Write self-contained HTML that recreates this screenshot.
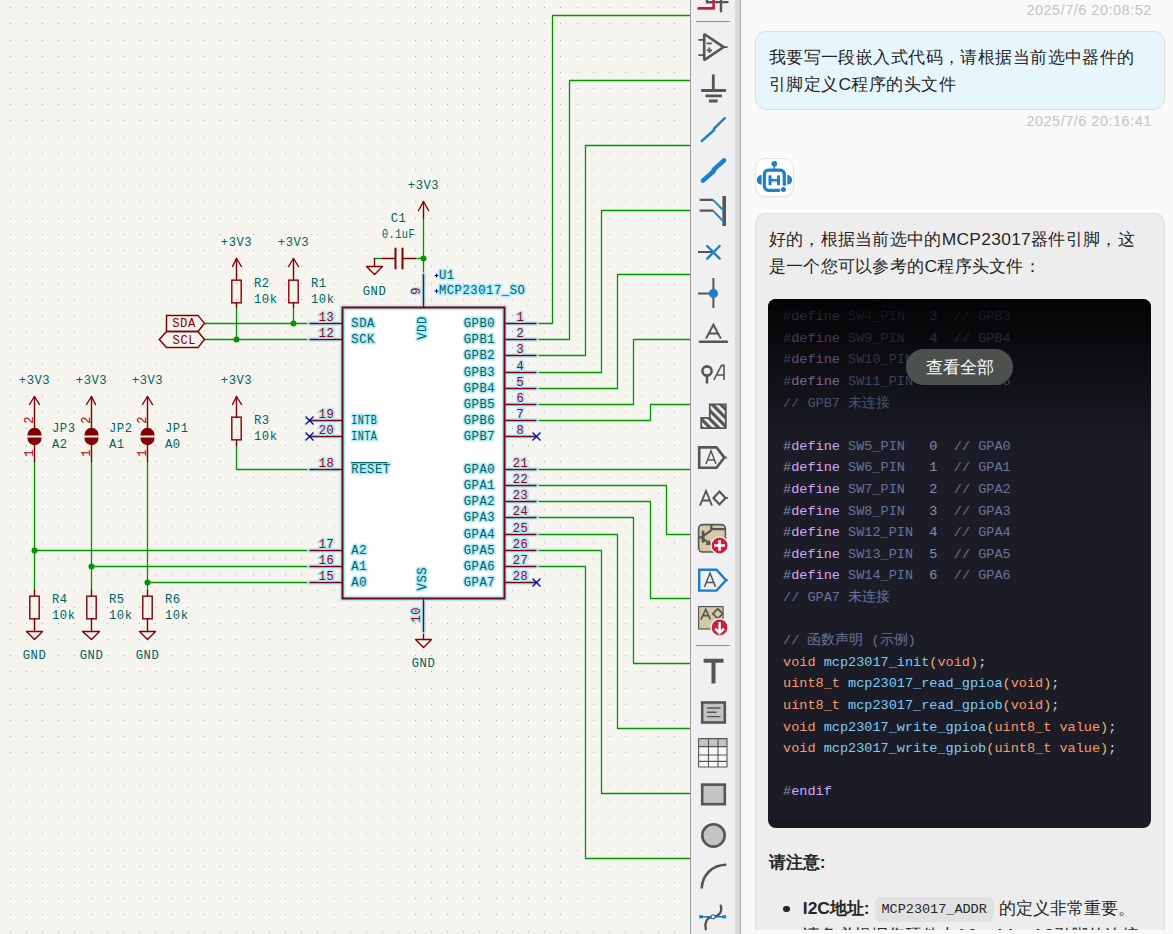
<!DOCTYPE html>
<html><head><meta charset="utf-8"><style>
html,body{margin:0;padding:0;width:1173px;height:934px;overflow:hidden;background:#f5f4ef;}
body{position:relative;font-family:"Liberation Sans",sans-serif;}
svg.sch{position:absolute;left:0;top:0;}
svg.sch text{font-family:"Liberation Mono",monospace;}
#panel{position:absolute;left:741px;top:0;width:432px;height:934px;background:#fafafa;overflow:hidden;color:#222;text-spacing-trim:space-all;}
.ts{position:absolute;right:21.2px;font-size:14.5px;letter-spacing:0.5px;color:#c4c4c4;line-height:17px;white-space:nowrap;}
.bub{position:absolute;box-sizing:border-box;}
.ub{left:14px;top:31px;width:410px;height:78.5px;background:#e7f6fd;border:1px solid #dadcdd;border-radius:11px;}
.ut{position:absolute;left:27.7px;font-size:17.4px;letter-spacing:0.43px;line-height:27px;white-space:nowrap;color:#262626;}
.av{position:absolute;left:14.4px;top:158px;width:38.5px;height:39px;box-sizing:border-box;background:#fff;border:1px solid #e4e4e4;border-radius:10px;box-shadow:0 1px 2px rgba(0,0,0,0.05);}
.ab{left:14px;top:213px;width:410px;height:717px;background:#ededed;border:1px solid #dedede;border-bottom:none;border-radius:10px 10px 0 0;overflow:hidden;}
.code{position:absolute;left:26.5px;top:299.2px;width:383.6px;height:528.9px;background:#1c1c27;border-radius:8px;overflow:hidden;}
.codein{position:absolute;left:15.5px;top:-14.5px;font-family:"Liberation Mono",monospace;font-size:13.55px;line-height:21.6px;white-space:pre;color:#6d7599;}
.cl{height:21.6px;}
.hs{color:#8a8fa3}.kw{color:#d4a8f2}.id{color:#6a7397}.nm{color:#8a90ab}.cm{color:#6a739a}
.ty{color:#f79a68}.fn{color:#7acdfb}.pa{color:#f0b36a}.pu{color:#c9cfe0}
.fade{position:absolute;left:0;top:0;width:100%;height:150px;background:linear-gradient(to bottom,rgba(0,0,0,0.88) 0%,rgba(0,0,0,0.5) 45%,rgba(0,0,0,0) 100%);}
.btn{position:absolute;left:165px;top:348.7px;width:107px;height:36px;border-radius:18px;background:#4c514e;color:#fff;font-size:17px;line-height:38.5px;text-align:center;}
.nt{position:absolute;left:27.8px;top:849px;font-size:17.4px;font-weight:bold;line-height:27px;color:#262626;white-space:nowrap;}
.li{position:absolute;left:0;top:895px;font-size:17.4px;line-height:27px;color:#262626;white-space:nowrap;}
.chip{display:inline-block;background:#e1e1e1;border-radius:6px;font-family:"Liberation Mono",monospace;font-size:13.5px;padding:0 7px;line-height:25px;vertical-align:1px;}
</style></head><body>
<svg class="sch" width="741" height="934" viewBox="0 0 741 934">
<path d="M10 7h1v1h-1zM10 23h1v1h-1zM10 40h1v1h-1zM10 56h1v1h-1zM10 72h1v1h-1zM10 88h1v1h-1zM10 104h1v1h-1zM10 120h1v1h-1zM10 137h1v1h-1zM10 153h1v1h-1zM10 169h1v1h-1zM10 185h1v1h-1zM10 201h1v1h-1zM10 218h1v1h-1zM10 234h1v1h-1zM10 250h1v1h-1zM10 266h1v1h-1zM10 283h1v1h-1zM10 299h1v1h-1zM10 315h1v1h-1zM10 331h1v1h-1zM10 347h1v1h-1zM10 364h1v1h-1zM10 380h1v1h-1zM10 396h1v1h-1zM10 412h1v1h-1zM10 428h1v1h-1zM10 445h1v1h-1zM10 461h1v1h-1zM10 477h1v1h-1zM10 493h1v1h-1zM10 509h1v1h-1zM10 526h1v1h-1zM10 542h1v1h-1zM10 558h1v1h-1zM10 574h1v1h-1zM10 590h1v1h-1zM10 607h1v1h-1zM10 623h1v1h-1zM10 639h1v1h-1zM10 655h1v1h-1zM10 671h1v1h-1zM10 688h1v1h-1zM10 704h1v1h-1zM10 720h1v1h-1zM10 736h1v1h-1zM10 752h1v1h-1zM10 769h1v1h-1zM10 785h1v1h-1zM10 801h1v1h-1zM10 817h1v1h-1zM10 833h1v1h-1zM10 850h1v1h-1zM10 866h1v1h-1zM10 882h1v1h-1zM10 898h1v1h-1zM10 914h1v1h-1zM10 931h1v1h-1zM26 7h1v1h-1zM26 23h1v1h-1zM26 40h1v1h-1zM26 56h1v1h-1zM26 72h1v1h-1zM26 88h1v1h-1zM26 104h1v1h-1zM26 120h1v1h-1zM26 137h1v1h-1zM26 153h1v1h-1zM26 169h1v1h-1zM26 185h1v1h-1zM26 201h1v1h-1zM26 218h1v1h-1zM26 234h1v1h-1zM26 250h1v1h-1zM26 266h1v1h-1zM26 283h1v1h-1zM26 299h1v1h-1zM26 315h1v1h-1zM26 331h1v1h-1zM26 347h1v1h-1zM26 364h1v1h-1zM26 380h1v1h-1zM26 396h1v1h-1zM26 412h1v1h-1zM26 428h1v1h-1zM26 445h1v1h-1zM26 461h1v1h-1zM26 477h1v1h-1zM26 493h1v1h-1zM26 509h1v1h-1zM26 526h1v1h-1zM26 542h1v1h-1zM26 558h1v1h-1zM26 574h1v1h-1zM26 590h1v1h-1zM26 607h1v1h-1zM26 623h1v1h-1zM26 639h1v1h-1zM26 655h1v1h-1zM26 671h1v1h-1zM26 688h1v1h-1zM26 704h1v1h-1zM26 720h1v1h-1zM26 736h1v1h-1zM26 752h1v1h-1zM26 769h1v1h-1zM26 785h1v1h-1zM26 801h1v1h-1zM26 817h1v1h-1zM26 833h1v1h-1zM26 850h1v1h-1zM26 866h1v1h-1zM26 882h1v1h-1zM26 898h1v1h-1zM26 914h1v1h-1zM26 931h1v1h-1zM42 7h1v1h-1zM42 23h1v1h-1zM42 40h1v1h-1zM42 56h1v1h-1zM42 72h1v1h-1zM42 88h1v1h-1zM42 104h1v1h-1zM42 120h1v1h-1zM42 137h1v1h-1zM42 153h1v1h-1zM42 169h1v1h-1zM42 185h1v1h-1zM42 201h1v1h-1zM42 218h1v1h-1zM42 234h1v1h-1zM42 250h1v1h-1zM42 266h1v1h-1zM42 283h1v1h-1zM42 299h1v1h-1zM42 315h1v1h-1zM42 331h1v1h-1zM42 347h1v1h-1zM42 364h1v1h-1zM42 380h1v1h-1zM42 396h1v1h-1zM42 412h1v1h-1zM42 428h1v1h-1zM42 445h1v1h-1zM42 461h1v1h-1zM42 477h1v1h-1zM42 493h1v1h-1zM42 509h1v1h-1zM42 526h1v1h-1zM42 542h1v1h-1zM42 558h1v1h-1zM42 574h1v1h-1zM42 590h1v1h-1zM42 607h1v1h-1zM42 623h1v1h-1zM42 639h1v1h-1zM42 655h1v1h-1zM42 671h1v1h-1zM42 688h1v1h-1zM42 704h1v1h-1zM42 720h1v1h-1zM42 736h1v1h-1zM42 752h1v1h-1zM42 769h1v1h-1zM42 785h1v1h-1zM42 801h1v1h-1zM42 817h1v1h-1zM42 833h1v1h-1zM42 850h1v1h-1zM42 866h1v1h-1zM42 882h1v1h-1zM42 898h1v1h-1zM42 914h1v1h-1zM42 931h1v1h-1zM58 7h1v1h-1zM58 23h1v1h-1zM58 40h1v1h-1zM58 56h1v1h-1zM58 72h1v1h-1zM58 88h1v1h-1zM58 104h1v1h-1zM58 120h1v1h-1zM58 137h1v1h-1zM58 153h1v1h-1zM58 169h1v1h-1zM58 185h1v1h-1zM58 201h1v1h-1zM58 218h1v1h-1zM58 234h1v1h-1zM58 250h1v1h-1zM58 266h1v1h-1zM58 283h1v1h-1zM58 299h1v1h-1zM58 315h1v1h-1zM58 331h1v1h-1zM58 347h1v1h-1zM58 364h1v1h-1zM58 380h1v1h-1zM58 396h1v1h-1zM58 412h1v1h-1zM58 428h1v1h-1zM58 445h1v1h-1zM58 461h1v1h-1zM58 477h1v1h-1zM58 493h1v1h-1zM58 509h1v1h-1zM58 526h1v1h-1zM58 542h1v1h-1zM58 558h1v1h-1zM58 574h1v1h-1zM58 590h1v1h-1zM58 607h1v1h-1zM58 623h1v1h-1zM58 639h1v1h-1zM58 655h1v1h-1zM58 671h1v1h-1zM58 688h1v1h-1zM58 704h1v1h-1zM58 720h1v1h-1zM58 736h1v1h-1zM58 752h1v1h-1zM58 769h1v1h-1zM58 785h1v1h-1zM58 801h1v1h-1zM58 817h1v1h-1zM58 833h1v1h-1zM58 850h1v1h-1zM58 866h1v1h-1zM58 882h1v1h-1zM58 898h1v1h-1zM58 914h1v1h-1zM58 931h1v1h-1zM74 7h1v1h-1zM74 23h1v1h-1zM74 40h1v1h-1zM74 56h1v1h-1zM74 72h1v1h-1zM74 88h1v1h-1zM74 104h1v1h-1zM74 120h1v1h-1zM74 137h1v1h-1zM74 153h1v1h-1zM74 169h1v1h-1zM74 185h1v1h-1zM74 201h1v1h-1zM74 218h1v1h-1zM74 234h1v1h-1zM74 250h1v1h-1zM74 266h1v1h-1zM74 283h1v1h-1zM74 299h1v1h-1zM74 315h1v1h-1zM74 331h1v1h-1zM74 347h1v1h-1zM74 364h1v1h-1zM74 380h1v1h-1zM74 396h1v1h-1zM74 412h1v1h-1zM74 428h1v1h-1zM74 445h1v1h-1zM74 461h1v1h-1zM74 477h1v1h-1zM74 493h1v1h-1zM74 509h1v1h-1zM74 526h1v1h-1zM74 542h1v1h-1zM74 558h1v1h-1zM74 574h1v1h-1zM74 590h1v1h-1zM74 607h1v1h-1zM74 623h1v1h-1zM74 639h1v1h-1zM74 655h1v1h-1zM74 671h1v1h-1zM74 688h1v1h-1zM74 704h1v1h-1zM74 720h1v1h-1zM74 736h1v1h-1zM74 752h1v1h-1zM74 769h1v1h-1zM74 785h1v1h-1zM74 801h1v1h-1zM74 817h1v1h-1zM74 833h1v1h-1zM74 850h1v1h-1zM74 866h1v1h-1zM74 882h1v1h-1zM74 898h1v1h-1zM74 914h1v1h-1zM74 931h1v1h-1zM91 7h1v1h-1zM91 23h1v1h-1zM91 40h1v1h-1zM91 56h1v1h-1zM91 72h1v1h-1zM91 88h1v1h-1zM91 104h1v1h-1zM91 120h1v1h-1zM91 137h1v1h-1zM91 153h1v1h-1zM91 169h1v1h-1zM91 185h1v1h-1zM91 201h1v1h-1zM91 218h1v1h-1zM91 234h1v1h-1zM91 250h1v1h-1zM91 266h1v1h-1zM91 283h1v1h-1zM91 299h1v1h-1zM91 315h1v1h-1zM91 331h1v1h-1zM91 347h1v1h-1zM91 364h1v1h-1zM91 380h1v1h-1zM91 396h1v1h-1zM91 412h1v1h-1zM91 428h1v1h-1zM91 445h1v1h-1zM91 461h1v1h-1zM91 477h1v1h-1zM91 493h1v1h-1zM91 509h1v1h-1zM91 526h1v1h-1zM91 542h1v1h-1zM91 558h1v1h-1zM91 574h1v1h-1zM91 590h1v1h-1zM91 607h1v1h-1zM91 623h1v1h-1zM91 639h1v1h-1zM91 655h1v1h-1zM91 671h1v1h-1zM91 688h1v1h-1zM91 704h1v1h-1zM91 720h1v1h-1zM91 736h1v1h-1zM91 752h1v1h-1zM91 769h1v1h-1zM91 785h1v1h-1zM91 801h1v1h-1zM91 817h1v1h-1zM91 833h1v1h-1zM91 850h1v1h-1zM91 866h1v1h-1zM91 882h1v1h-1zM91 898h1v1h-1zM91 914h1v1h-1zM91 931h1v1h-1zM107 7h1v1h-1zM107 23h1v1h-1zM107 40h1v1h-1zM107 56h1v1h-1zM107 72h1v1h-1zM107 88h1v1h-1zM107 104h1v1h-1zM107 120h1v1h-1zM107 137h1v1h-1zM107 153h1v1h-1zM107 169h1v1h-1zM107 185h1v1h-1zM107 201h1v1h-1zM107 218h1v1h-1zM107 234h1v1h-1zM107 250h1v1h-1zM107 266h1v1h-1zM107 283h1v1h-1zM107 299h1v1h-1zM107 315h1v1h-1zM107 331h1v1h-1zM107 347h1v1h-1zM107 364h1v1h-1zM107 380h1v1h-1zM107 396h1v1h-1zM107 412h1v1h-1zM107 428h1v1h-1zM107 445h1v1h-1zM107 461h1v1h-1zM107 477h1v1h-1zM107 493h1v1h-1zM107 509h1v1h-1zM107 526h1v1h-1zM107 542h1v1h-1zM107 558h1v1h-1zM107 574h1v1h-1zM107 590h1v1h-1zM107 607h1v1h-1zM107 623h1v1h-1zM107 639h1v1h-1zM107 655h1v1h-1zM107 671h1v1h-1zM107 688h1v1h-1zM107 704h1v1h-1zM107 720h1v1h-1zM107 736h1v1h-1zM107 752h1v1h-1zM107 769h1v1h-1zM107 785h1v1h-1zM107 801h1v1h-1zM107 817h1v1h-1zM107 833h1v1h-1zM107 850h1v1h-1zM107 866h1v1h-1zM107 882h1v1h-1zM107 898h1v1h-1zM107 914h1v1h-1zM107 931h1v1h-1zM123 7h1v1h-1zM123 23h1v1h-1zM123 40h1v1h-1zM123 56h1v1h-1zM123 72h1v1h-1zM123 88h1v1h-1zM123 104h1v1h-1zM123 120h1v1h-1zM123 137h1v1h-1zM123 153h1v1h-1zM123 169h1v1h-1zM123 185h1v1h-1zM123 201h1v1h-1zM123 218h1v1h-1zM123 234h1v1h-1zM123 250h1v1h-1zM123 266h1v1h-1zM123 283h1v1h-1zM123 299h1v1h-1zM123 315h1v1h-1zM123 331h1v1h-1zM123 347h1v1h-1zM123 364h1v1h-1zM123 380h1v1h-1zM123 396h1v1h-1zM123 412h1v1h-1zM123 428h1v1h-1zM123 445h1v1h-1zM123 461h1v1h-1zM123 477h1v1h-1zM123 493h1v1h-1zM123 509h1v1h-1zM123 526h1v1h-1zM123 542h1v1h-1zM123 558h1v1h-1zM123 574h1v1h-1zM123 590h1v1h-1zM123 607h1v1h-1zM123 623h1v1h-1zM123 639h1v1h-1zM123 655h1v1h-1zM123 671h1v1h-1zM123 688h1v1h-1zM123 704h1v1h-1zM123 720h1v1h-1zM123 736h1v1h-1zM123 752h1v1h-1zM123 769h1v1h-1zM123 785h1v1h-1zM123 801h1v1h-1zM123 817h1v1h-1zM123 833h1v1h-1zM123 850h1v1h-1zM123 866h1v1h-1zM123 882h1v1h-1zM123 898h1v1h-1zM123 914h1v1h-1zM123 931h1v1h-1zM139 7h1v1h-1zM139 23h1v1h-1zM139 40h1v1h-1zM139 56h1v1h-1zM139 72h1v1h-1zM139 88h1v1h-1zM139 104h1v1h-1zM139 120h1v1h-1zM139 137h1v1h-1zM139 153h1v1h-1zM139 169h1v1h-1zM139 185h1v1h-1zM139 201h1v1h-1zM139 218h1v1h-1zM139 234h1v1h-1zM139 250h1v1h-1zM139 266h1v1h-1zM139 283h1v1h-1zM139 299h1v1h-1zM139 315h1v1h-1zM139 331h1v1h-1zM139 347h1v1h-1zM139 364h1v1h-1zM139 380h1v1h-1zM139 396h1v1h-1zM139 412h1v1h-1zM139 428h1v1h-1zM139 445h1v1h-1zM139 461h1v1h-1zM139 477h1v1h-1zM139 493h1v1h-1zM139 509h1v1h-1zM139 526h1v1h-1zM139 542h1v1h-1zM139 558h1v1h-1zM139 574h1v1h-1zM139 590h1v1h-1zM139 607h1v1h-1zM139 623h1v1h-1zM139 639h1v1h-1zM139 655h1v1h-1zM139 671h1v1h-1zM139 688h1v1h-1zM139 704h1v1h-1zM139 720h1v1h-1zM139 736h1v1h-1zM139 752h1v1h-1zM139 769h1v1h-1zM139 785h1v1h-1zM139 801h1v1h-1zM139 817h1v1h-1zM139 833h1v1h-1zM139 850h1v1h-1zM139 866h1v1h-1zM139 882h1v1h-1zM139 898h1v1h-1zM139 914h1v1h-1zM139 931h1v1h-1zM155 7h1v1h-1zM155 23h1v1h-1zM155 40h1v1h-1zM155 56h1v1h-1zM155 72h1v1h-1zM155 88h1v1h-1zM155 104h1v1h-1zM155 120h1v1h-1zM155 137h1v1h-1zM155 153h1v1h-1zM155 169h1v1h-1zM155 185h1v1h-1zM155 201h1v1h-1zM155 218h1v1h-1zM155 234h1v1h-1zM155 250h1v1h-1zM155 266h1v1h-1zM155 283h1v1h-1zM155 299h1v1h-1zM155 315h1v1h-1zM155 331h1v1h-1zM155 347h1v1h-1zM155 364h1v1h-1zM155 380h1v1h-1zM155 396h1v1h-1zM155 412h1v1h-1zM155 428h1v1h-1zM155 445h1v1h-1zM155 461h1v1h-1zM155 477h1v1h-1zM155 493h1v1h-1zM155 509h1v1h-1zM155 526h1v1h-1zM155 542h1v1h-1zM155 558h1v1h-1zM155 574h1v1h-1zM155 590h1v1h-1zM155 607h1v1h-1zM155 623h1v1h-1zM155 639h1v1h-1zM155 655h1v1h-1zM155 671h1v1h-1zM155 688h1v1h-1zM155 704h1v1h-1zM155 720h1v1h-1zM155 736h1v1h-1zM155 752h1v1h-1zM155 769h1v1h-1zM155 785h1v1h-1zM155 801h1v1h-1zM155 817h1v1h-1zM155 833h1v1h-1zM155 850h1v1h-1zM155 866h1v1h-1zM155 882h1v1h-1zM155 898h1v1h-1zM155 914h1v1h-1zM155 931h1v1h-1zM172 7h1v1h-1zM172 23h1v1h-1zM172 40h1v1h-1zM172 56h1v1h-1zM172 72h1v1h-1zM172 88h1v1h-1zM172 104h1v1h-1zM172 120h1v1h-1zM172 137h1v1h-1zM172 153h1v1h-1zM172 169h1v1h-1zM172 185h1v1h-1zM172 201h1v1h-1zM172 218h1v1h-1zM172 234h1v1h-1zM172 250h1v1h-1zM172 266h1v1h-1zM172 283h1v1h-1zM172 299h1v1h-1zM172 315h1v1h-1zM172 331h1v1h-1zM172 347h1v1h-1zM172 364h1v1h-1zM172 380h1v1h-1zM172 396h1v1h-1zM172 412h1v1h-1zM172 428h1v1h-1zM172 445h1v1h-1zM172 461h1v1h-1zM172 477h1v1h-1zM172 493h1v1h-1zM172 509h1v1h-1zM172 526h1v1h-1zM172 542h1v1h-1zM172 558h1v1h-1zM172 574h1v1h-1zM172 590h1v1h-1zM172 607h1v1h-1zM172 623h1v1h-1zM172 639h1v1h-1zM172 655h1v1h-1zM172 671h1v1h-1zM172 688h1v1h-1zM172 704h1v1h-1zM172 720h1v1h-1zM172 736h1v1h-1zM172 752h1v1h-1zM172 769h1v1h-1zM172 785h1v1h-1zM172 801h1v1h-1zM172 817h1v1h-1zM172 833h1v1h-1zM172 850h1v1h-1zM172 866h1v1h-1zM172 882h1v1h-1zM172 898h1v1h-1zM172 914h1v1h-1zM172 931h1v1h-1zM188 7h1v1h-1zM188 23h1v1h-1zM188 40h1v1h-1zM188 56h1v1h-1zM188 72h1v1h-1zM188 88h1v1h-1zM188 104h1v1h-1zM188 120h1v1h-1zM188 137h1v1h-1zM188 153h1v1h-1zM188 169h1v1h-1zM188 185h1v1h-1zM188 201h1v1h-1zM188 218h1v1h-1zM188 234h1v1h-1zM188 250h1v1h-1zM188 266h1v1h-1zM188 283h1v1h-1zM188 299h1v1h-1zM188 315h1v1h-1zM188 331h1v1h-1zM188 347h1v1h-1zM188 364h1v1h-1zM188 380h1v1h-1zM188 396h1v1h-1zM188 412h1v1h-1zM188 428h1v1h-1zM188 445h1v1h-1zM188 461h1v1h-1zM188 477h1v1h-1zM188 493h1v1h-1zM188 509h1v1h-1zM188 526h1v1h-1zM188 542h1v1h-1zM188 558h1v1h-1zM188 574h1v1h-1zM188 590h1v1h-1zM188 607h1v1h-1zM188 623h1v1h-1zM188 639h1v1h-1zM188 655h1v1h-1zM188 671h1v1h-1zM188 688h1v1h-1zM188 704h1v1h-1zM188 720h1v1h-1zM188 736h1v1h-1zM188 752h1v1h-1zM188 769h1v1h-1zM188 785h1v1h-1zM188 801h1v1h-1zM188 817h1v1h-1zM188 833h1v1h-1zM188 850h1v1h-1zM188 866h1v1h-1zM188 882h1v1h-1zM188 898h1v1h-1zM188 914h1v1h-1zM188 931h1v1h-1zM204 7h1v1h-1zM204 23h1v1h-1zM204 40h1v1h-1zM204 56h1v1h-1zM204 72h1v1h-1zM204 88h1v1h-1zM204 104h1v1h-1zM204 120h1v1h-1zM204 137h1v1h-1zM204 153h1v1h-1zM204 169h1v1h-1zM204 185h1v1h-1zM204 201h1v1h-1zM204 218h1v1h-1zM204 234h1v1h-1zM204 250h1v1h-1zM204 266h1v1h-1zM204 283h1v1h-1zM204 299h1v1h-1zM204 315h1v1h-1zM204 331h1v1h-1zM204 347h1v1h-1zM204 364h1v1h-1zM204 380h1v1h-1zM204 396h1v1h-1zM204 412h1v1h-1zM204 428h1v1h-1zM204 445h1v1h-1zM204 461h1v1h-1zM204 477h1v1h-1zM204 493h1v1h-1zM204 509h1v1h-1zM204 526h1v1h-1zM204 542h1v1h-1zM204 558h1v1h-1zM204 574h1v1h-1zM204 590h1v1h-1zM204 607h1v1h-1zM204 623h1v1h-1zM204 639h1v1h-1zM204 655h1v1h-1zM204 671h1v1h-1zM204 688h1v1h-1zM204 704h1v1h-1zM204 720h1v1h-1zM204 736h1v1h-1zM204 752h1v1h-1zM204 769h1v1h-1zM204 785h1v1h-1zM204 801h1v1h-1zM204 817h1v1h-1zM204 833h1v1h-1zM204 850h1v1h-1zM204 866h1v1h-1zM204 882h1v1h-1zM204 898h1v1h-1zM204 914h1v1h-1zM204 931h1v1h-1zM220 7h1v1h-1zM220 23h1v1h-1zM220 40h1v1h-1zM220 56h1v1h-1zM220 72h1v1h-1zM220 88h1v1h-1zM220 104h1v1h-1zM220 120h1v1h-1zM220 137h1v1h-1zM220 153h1v1h-1zM220 169h1v1h-1zM220 185h1v1h-1zM220 201h1v1h-1zM220 218h1v1h-1zM220 234h1v1h-1zM220 250h1v1h-1zM220 266h1v1h-1zM220 283h1v1h-1zM220 299h1v1h-1zM220 315h1v1h-1zM220 331h1v1h-1zM220 347h1v1h-1zM220 364h1v1h-1zM220 380h1v1h-1zM220 396h1v1h-1zM220 412h1v1h-1zM220 428h1v1h-1zM220 445h1v1h-1zM220 461h1v1h-1zM220 477h1v1h-1zM220 493h1v1h-1zM220 509h1v1h-1zM220 526h1v1h-1zM220 542h1v1h-1zM220 558h1v1h-1zM220 574h1v1h-1zM220 590h1v1h-1zM220 607h1v1h-1zM220 623h1v1h-1zM220 639h1v1h-1zM220 655h1v1h-1zM220 671h1v1h-1zM220 688h1v1h-1zM220 704h1v1h-1zM220 720h1v1h-1zM220 736h1v1h-1zM220 752h1v1h-1zM220 769h1v1h-1zM220 785h1v1h-1zM220 801h1v1h-1zM220 817h1v1h-1zM220 833h1v1h-1zM220 850h1v1h-1zM220 866h1v1h-1zM220 882h1v1h-1zM220 898h1v1h-1zM220 914h1v1h-1zM220 931h1v1h-1zM236 7h1v1h-1zM236 23h1v1h-1zM236 40h1v1h-1zM236 56h1v1h-1zM236 72h1v1h-1zM236 88h1v1h-1zM236 104h1v1h-1zM236 120h1v1h-1zM236 137h1v1h-1zM236 153h1v1h-1zM236 169h1v1h-1zM236 185h1v1h-1zM236 201h1v1h-1zM236 218h1v1h-1zM236 234h1v1h-1zM236 250h1v1h-1zM236 266h1v1h-1zM236 283h1v1h-1zM236 299h1v1h-1zM236 315h1v1h-1zM236 331h1v1h-1zM236 347h1v1h-1zM236 364h1v1h-1zM236 380h1v1h-1zM236 396h1v1h-1zM236 412h1v1h-1zM236 428h1v1h-1zM236 445h1v1h-1zM236 461h1v1h-1zM236 477h1v1h-1zM236 493h1v1h-1zM236 509h1v1h-1zM236 526h1v1h-1zM236 542h1v1h-1zM236 558h1v1h-1zM236 574h1v1h-1zM236 590h1v1h-1zM236 607h1v1h-1zM236 623h1v1h-1zM236 639h1v1h-1zM236 655h1v1h-1zM236 671h1v1h-1zM236 688h1v1h-1zM236 704h1v1h-1zM236 720h1v1h-1zM236 736h1v1h-1zM236 752h1v1h-1zM236 769h1v1h-1zM236 785h1v1h-1zM236 801h1v1h-1zM236 817h1v1h-1zM236 833h1v1h-1zM236 850h1v1h-1zM236 866h1v1h-1zM236 882h1v1h-1zM236 898h1v1h-1zM236 914h1v1h-1zM236 931h1v1h-1zM253 7h1v1h-1zM253 23h1v1h-1zM253 40h1v1h-1zM253 56h1v1h-1zM253 72h1v1h-1zM253 88h1v1h-1zM253 104h1v1h-1zM253 120h1v1h-1zM253 137h1v1h-1zM253 153h1v1h-1zM253 169h1v1h-1zM253 185h1v1h-1zM253 201h1v1h-1zM253 218h1v1h-1zM253 234h1v1h-1zM253 250h1v1h-1zM253 266h1v1h-1zM253 283h1v1h-1zM253 299h1v1h-1zM253 315h1v1h-1zM253 331h1v1h-1zM253 347h1v1h-1zM253 364h1v1h-1zM253 380h1v1h-1zM253 396h1v1h-1zM253 412h1v1h-1zM253 428h1v1h-1zM253 445h1v1h-1zM253 461h1v1h-1zM253 477h1v1h-1zM253 493h1v1h-1zM253 509h1v1h-1zM253 526h1v1h-1zM253 542h1v1h-1zM253 558h1v1h-1zM253 574h1v1h-1zM253 590h1v1h-1zM253 607h1v1h-1zM253 623h1v1h-1zM253 639h1v1h-1zM253 655h1v1h-1zM253 671h1v1h-1zM253 688h1v1h-1zM253 704h1v1h-1zM253 720h1v1h-1zM253 736h1v1h-1zM253 752h1v1h-1zM253 769h1v1h-1zM253 785h1v1h-1zM253 801h1v1h-1zM253 817h1v1h-1zM253 833h1v1h-1zM253 850h1v1h-1zM253 866h1v1h-1zM253 882h1v1h-1zM253 898h1v1h-1zM253 914h1v1h-1zM253 931h1v1h-1zM269 7h1v1h-1zM269 23h1v1h-1zM269 40h1v1h-1zM269 56h1v1h-1zM269 72h1v1h-1zM269 88h1v1h-1zM269 104h1v1h-1zM269 120h1v1h-1zM269 137h1v1h-1zM269 153h1v1h-1zM269 169h1v1h-1zM269 185h1v1h-1zM269 201h1v1h-1zM269 218h1v1h-1zM269 234h1v1h-1zM269 250h1v1h-1zM269 266h1v1h-1zM269 283h1v1h-1zM269 299h1v1h-1zM269 315h1v1h-1zM269 331h1v1h-1zM269 347h1v1h-1zM269 364h1v1h-1zM269 380h1v1h-1zM269 396h1v1h-1zM269 412h1v1h-1zM269 428h1v1h-1zM269 445h1v1h-1zM269 461h1v1h-1zM269 477h1v1h-1zM269 493h1v1h-1zM269 509h1v1h-1zM269 526h1v1h-1zM269 542h1v1h-1zM269 558h1v1h-1zM269 574h1v1h-1zM269 590h1v1h-1zM269 607h1v1h-1zM269 623h1v1h-1zM269 639h1v1h-1zM269 655h1v1h-1zM269 671h1v1h-1zM269 688h1v1h-1zM269 704h1v1h-1zM269 720h1v1h-1zM269 736h1v1h-1zM269 752h1v1h-1zM269 769h1v1h-1zM269 785h1v1h-1zM269 801h1v1h-1zM269 817h1v1h-1zM269 833h1v1h-1zM269 850h1v1h-1zM269 866h1v1h-1zM269 882h1v1h-1zM269 898h1v1h-1zM269 914h1v1h-1zM269 931h1v1h-1zM285 7h1v1h-1zM285 23h1v1h-1zM285 40h1v1h-1zM285 56h1v1h-1zM285 72h1v1h-1zM285 88h1v1h-1zM285 104h1v1h-1zM285 120h1v1h-1zM285 137h1v1h-1zM285 153h1v1h-1zM285 169h1v1h-1zM285 185h1v1h-1zM285 201h1v1h-1zM285 218h1v1h-1zM285 234h1v1h-1zM285 250h1v1h-1zM285 266h1v1h-1zM285 283h1v1h-1zM285 299h1v1h-1zM285 315h1v1h-1zM285 331h1v1h-1zM285 347h1v1h-1zM285 364h1v1h-1zM285 380h1v1h-1zM285 396h1v1h-1zM285 412h1v1h-1zM285 428h1v1h-1zM285 445h1v1h-1zM285 461h1v1h-1zM285 477h1v1h-1zM285 493h1v1h-1zM285 509h1v1h-1zM285 526h1v1h-1zM285 542h1v1h-1zM285 558h1v1h-1zM285 574h1v1h-1zM285 590h1v1h-1zM285 607h1v1h-1zM285 623h1v1h-1zM285 639h1v1h-1zM285 655h1v1h-1zM285 671h1v1h-1zM285 688h1v1h-1zM285 704h1v1h-1zM285 720h1v1h-1zM285 736h1v1h-1zM285 752h1v1h-1zM285 769h1v1h-1zM285 785h1v1h-1zM285 801h1v1h-1zM285 817h1v1h-1zM285 833h1v1h-1zM285 850h1v1h-1zM285 866h1v1h-1zM285 882h1v1h-1zM285 898h1v1h-1zM285 914h1v1h-1zM285 931h1v1h-1zM301 7h1v1h-1zM301 23h1v1h-1zM301 40h1v1h-1zM301 56h1v1h-1zM301 72h1v1h-1zM301 88h1v1h-1zM301 104h1v1h-1zM301 120h1v1h-1zM301 137h1v1h-1zM301 153h1v1h-1zM301 169h1v1h-1zM301 185h1v1h-1zM301 201h1v1h-1zM301 218h1v1h-1zM301 234h1v1h-1zM301 250h1v1h-1zM301 266h1v1h-1zM301 283h1v1h-1zM301 299h1v1h-1zM301 315h1v1h-1zM301 331h1v1h-1zM301 347h1v1h-1zM301 364h1v1h-1zM301 380h1v1h-1zM301 396h1v1h-1zM301 412h1v1h-1zM301 428h1v1h-1zM301 445h1v1h-1zM301 461h1v1h-1zM301 477h1v1h-1zM301 493h1v1h-1zM301 509h1v1h-1zM301 526h1v1h-1zM301 542h1v1h-1zM301 558h1v1h-1zM301 574h1v1h-1zM301 590h1v1h-1zM301 607h1v1h-1zM301 623h1v1h-1zM301 639h1v1h-1zM301 655h1v1h-1zM301 671h1v1h-1zM301 688h1v1h-1zM301 704h1v1h-1zM301 720h1v1h-1zM301 736h1v1h-1zM301 752h1v1h-1zM301 769h1v1h-1zM301 785h1v1h-1zM301 801h1v1h-1zM301 817h1v1h-1zM301 833h1v1h-1zM301 850h1v1h-1zM301 866h1v1h-1zM301 882h1v1h-1zM301 898h1v1h-1zM301 914h1v1h-1zM301 931h1v1h-1zM317 7h1v1h-1zM317 23h1v1h-1zM317 40h1v1h-1zM317 56h1v1h-1zM317 72h1v1h-1zM317 88h1v1h-1zM317 104h1v1h-1zM317 120h1v1h-1zM317 137h1v1h-1zM317 153h1v1h-1zM317 169h1v1h-1zM317 185h1v1h-1zM317 201h1v1h-1zM317 218h1v1h-1zM317 234h1v1h-1zM317 250h1v1h-1zM317 266h1v1h-1zM317 283h1v1h-1zM317 299h1v1h-1zM317 315h1v1h-1zM317 331h1v1h-1zM317 347h1v1h-1zM317 364h1v1h-1zM317 380h1v1h-1zM317 396h1v1h-1zM317 412h1v1h-1zM317 428h1v1h-1zM317 445h1v1h-1zM317 461h1v1h-1zM317 477h1v1h-1zM317 493h1v1h-1zM317 509h1v1h-1zM317 526h1v1h-1zM317 542h1v1h-1zM317 558h1v1h-1zM317 574h1v1h-1zM317 590h1v1h-1zM317 607h1v1h-1zM317 623h1v1h-1zM317 639h1v1h-1zM317 655h1v1h-1zM317 671h1v1h-1zM317 688h1v1h-1zM317 704h1v1h-1zM317 720h1v1h-1zM317 736h1v1h-1zM317 752h1v1h-1zM317 769h1v1h-1zM317 785h1v1h-1zM317 801h1v1h-1zM317 817h1v1h-1zM317 833h1v1h-1zM317 850h1v1h-1zM317 866h1v1h-1zM317 882h1v1h-1zM317 898h1v1h-1zM317 914h1v1h-1zM317 931h1v1h-1zM334 7h1v1h-1zM334 23h1v1h-1zM334 40h1v1h-1zM334 56h1v1h-1zM334 72h1v1h-1zM334 88h1v1h-1zM334 104h1v1h-1zM334 120h1v1h-1zM334 137h1v1h-1zM334 153h1v1h-1zM334 169h1v1h-1zM334 185h1v1h-1zM334 201h1v1h-1zM334 218h1v1h-1zM334 234h1v1h-1zM334 250h1v1h-1zM334 266h1v1h-1zM334 283h1v1h-1zM334 299h1v1h-1zM334 315h1v1h-1zM334 331h1v1h-1zM334 347h1v1h-1zM334 364h1v1h-1zM334 380h1v1h-1zM334 396h1v1h-1zM334 412h1v1h-1zM334 428h1v1h-1zM334 445h1v1h-1zM334 461h1v1h-1zM334 477h1v1h-1zM334 493h1v1h-1zM334 509h1v1h-1zM334 526h1v1h-1zM334 542h1v1h-1zM334 558h1v1h-1zM334 574h1v1h-1zM334 590h1v1h-1zM334 607h1v1h-1zM334 623h1v1h-1zM334 639h1v1h-1zM334 655h1v1h-1zM334 671h1v1h-1zM334 688h1v1h-1zM334 704h1v1h-1zM334 720h1v1h-1zM334 736h1v1h-1zM334 752h1v1h-1zM334 769h1v1h-1zM334 785h1v1h-1zM334 801h1v1h-1zM334 817h1v1h-1zM334 833h1v1h-1zM334 850h1v1h-1zM334 866h1v1h-1zM334 882h1v1h-1zM334 898h1v1h-1zM334 914h1v1h-1zM334 931h1v1h-1zM350 7h1v1h-1zM350 23h1v1h-1zM350 40h1v1h-1zM350 56h1v1h-1zM350 72h1v1h-1zM350 88h1v1h-1zM350 104h1v1h-1zM350 120h1v1h-1zM350 137h1v1h-1zM350 153h1v1h-1zM350 169h1v1h-1zM350 185h1v1h-1zM350 201h1v1h-1zM350 218h1v1h-1zM350 234h1v1h-1zM350 250h1v1h-1zM350 266h1v1h-1zM350 283h1v1h-1zM350 299h1v1h-1zM350 315h1v1h-1zM350 331h1v1h-1zM350 347h1v1h-1zM350 364h1v1h-1zM350 380h1v1h-1zM350 396h1v1h-1zM350 412h1v1h-1zM350 428h1v1h-1zM350 445h1v1h-1zM350 461h1v1h-1zM350 477h1v1h-1zM350 493h1v1h-1zM350 509h1v1h-1zM350 526h1v1h-1zM350 542h1v1h-1zM350 558h1v1h-1zM350 574h1v1h-1zM350 590h1v1h-1zM350 607h1v1h-1zM350 623h1v1h-1zM350 639h1v1h-1zM350 655h1v1h-1zM350 671h1v1h-1zM350 688h1v1h-1zM350 704h1v1h-1zM350 720h1v1h-1zM350 736h1v1h-1zM350 752h1v1h-1zM350 769h1v1h-1zM350 785h1v1h-1zM350 801h1v1h-1zM350 817h1v1h-1zM350 833h1v1h-1zM350 850h1v1h-1zM350 866h1v1h-1zM350 882h1v1h-1zM350 898h1v1h-1zM350 914h1v1h-1zM350 931h1v1h-1zM366 7h1v1h-1zM366 23h1v1h-1zM366 40h1v1h-1zM366 56h1v1h-1zM366 72h1v1h-1zM366 88h1v1h-1zM366 104h1v1h-1zM366 120h1v1h-1zM366 137h1v1h-1zM366 153h1v1h-1zM366 169h1v1h-1zM366 185h1v1h-1zM366 201h1v1h-1zM366 218h1v1h-1zM366 234h1v1h-1zM366 250h1v1h-1zM366 266h1v1h-1zM366 283h1v1h-1zM366 299h1v1h-1zM366 315h1v1h-1zM366 331h1v1h-1zM366 347h1v1h-1zM366 364h1v1h-1zM366 380h1v1h-1zM366 396h1v1h-1zM366 412h1v1h-1zM366 428h1v1h-1zM366 445h1v1h-1zM366 461h1v1h-1zM366 477h1v1h-1zM366 493h1v1h-1zM366 509h1v1h-1zM366 526h1v1h-1zM366 542h1v1h-1zM366 558h1v1h-1zM366 574h1v1h-1zM366 590h1v1h-1zM366 607h1v1h-1zM366 623h1v1h-1zM366 639h1v1h-1zM366 655h1v1h-1zM366 671h1v1h-1zM366 688h1v1h-1zM366 704h1v1h-1zM366 720h1v1h-1zM366 736h1v1h-1zM366 752h1v1h-1zM366 769h1v1h-1zM366 785h1v1h-1zM366 801h1v1h-1zM366 817h1v1h-1zM366 833h1v1h-1zM366 850h1v1h-1zM366 866h1v1h-1zM366 882h1v1h-1zM366 898h1v1h-1zM366 914h1v1h-1zM366 931h1v1h-1zM382 7h1v1h-1zM382 23h1v1h-1zM382 40h1v1h-1zM382 56h1v1h-1zM382 72h1v1h-1zM382 88h1v1h-1zM382 104h1v1h-1zM382 120h1v1h-1zM382 137h1v1h-1zM382 153h1v1h-1zM382 169h1v1h-1zM382 185h1v1h-1zM382 201h1v1h-1zM382 218h1v1h-1zM382 234h1v1h-1zM382 250h1v1h-1zM382 266h1v1h-1zM382 283h1v1h-1zM382 299h1v1h-1zM382 315h1v1h-1zM382 331h1v1h-1zM382 347h1v1h-1zM382 364h1v1h-1zM382 380h1v1h-1zM382 396h1v1h-1zM382 412h1v1h-1zM382 428h1v1h-1zM382 445h1v1h-1zM382 461h1v1h-1zM382 477h1v1h-1zM382 493h1v1h-1zM382 509h1v1h-1zM382 526h1v1h-1zM382 542h1v1h-1zM382 558h1v1h-1zM382 574h1v1h-1zM382 590h1v1h-1zM382 607h1v1h-1zM382 623h1v1h-1zM382 639h1v1h-1zM382 655h1v1h-1zM382 671h1v1h-1zM382 688h1v1h-1zM382 704h1v1h-1zM382 720h1v1h-1zM382 736h1v1h-1zM382 752h1v1h-1zM382 769h1v1h-1zM382 785h1v1h-1zM382 801h1v1h-1zM382 817h1v1h-1zM382 833h1v1h-1zM382 850h1v1h-1zM382 866h1v1h-1zM382 882h1v1h-1zM382 898h1v1h-1zM382 914h1v1h-1zM382 931h1v1h-1zM398 7h1v1h-1zM398 23h1v1h-1zM398 40h1v1h-1zM398 56h1v1h-1zM398 72h1v1h-1zM398 88h1v1h-1zM398 104h1v1h-1zM398 120h1v1h-1zM398 137h1v1h-1zM398 153h1v1h-1zM398 169h1v1h-1zM398 185h1v1h-1zM398 201h1v1h-1zM398 218h1v1h-1zM398 234h1v1h-1zM398 250h1v1h-1zM398 266h1v1h-1zM398 283h1v1h-1zM398 299h1v1h-1zM398 315h1v1h-1zM398 331h1v1h-1zM398 347h1v1h-1zM398 364h1v1h-1zM398 380h1v1h-1zM398 396h1v1h-1zM398 412h1v1h-1zM398 428h1v1h-1zM398 445h1v1h-1zM398 461h1v1h-1zM398 477h1v1h-1zM398 493h1v1h-1zM398 509h1v1h-1zM398 526h1v1h-1zM398 542h1v1h-1zM398 558h1v1h-1zM398 574h1v1h-1zM398 590h1v1h-1zM398 607h1v1h-1zM398 623h1v1h-1zM398 639h1v1h-1zM398 655h1v1h-1zM398 671h1v1h-1zM398 688h1v1h-1zM398 704h1v1h-1zM398 720h1v1h-1zM398 736h1v1h-1zM398 752h1v1h-1zM398 769h1v1h-1zM398 785h1v1h-1zM398 801h1v1h-1zM398 817h1v1h-1zM398 833h1v1h-1zM398 850h1v1h-1zM398 866h1v1h-1zM398 882h1v1h-1zM398 898h1v1h-1zM398 914h1v1h-1zM398 931h1v1h-1zM415 7h1v1h-1zM415 23h1v1h-1zM415 40h1v1h-1zM415 56h1v1h-1zM415 72h1v1h-1zM415 88h1v1h-1zM415 104h1v1h-1zM415 120h1v1h-1zM415 137h1v1h-1zM415 153h1v1h-1zM415 169h1v1h-1zM415 185h1v1h-1zM415 201h1v1h-1zM415 218h1v1h-1zM415 234h1v1h-1zM415 250h1v1h-1zM415 266h1v1h-1zM415 283h1v1h-1zM415 299h1v1h-1zM415 315h1v1h-1zM415 331h1v1h-1zM415 347h1v1h-1zM415 364h1v1h-1zM415 380h1v1h-1zM415 396h1v1h-1zM415 412h1v1h-1zM415 428h1v1h-1zM415 445h1v1h-1zM415 461h1v1h-1zM415 477h1v1h-1zM415 493h1v1h-1zM415 509h1v1h-1zM415 526h1v1h-1zM415 542h1v1h-1zM415 558h1v1h-1zM415 574h1v1h-1zM415 590h1v1h-1zM415 607h1v1h-1zM415 623h1v1h-1zM415 639h1v1h-1zM415 655h1v1h-1zM415 671h1v1h-1zM415 688h1v1h-1zM415 704h1v1h-1zM415 720h1v1h-1zM415 736h1v1h-1zM415 752h1v1h-1zM415 769h1v1h-1zM415 785h1v1h-1zM415 801h1v1h-1zM415 817h1v1h-1zM415 833h1v1h-1zM415 850h1v1h-1zM415 866h1v1h-1zM415 882h1v1h-1zM415 898h1v1h-1zM415 914h1v1h-1zM415 931h1v1h-1zM431 7h1v1h-1zM431 23h1v1h-1zM431 40h1v1h-1zM431 56h1v1h-1zM431 72h1v1h-1zM431 88h1v1h-1zM431 104h1v1h-1zM431 120h1v1h-1zM431 137h1v1h-1zM431 153h1v1h-1zM431 169h1v1h-1zM431 185h1v1h-1zM431 201h1v1h-1zM431 218h1v1h-1zM431 234h1v1h-1zM431 250h1v1h-1zM431 266h1v1h-1zM431 283h1v1h-1zM431 299h1v1h-1zM431 315h1v1h-1zM431 331h1v1h-1zM431 347h1v1h-1zM431 364h1v1h-1zM431 380h1v1h-1zM431 396h1v1h-1zM431 412h1v1h-1zM431 428h1v1h-1zM431 445h1v1h-1zM431 461h1v1h-1zM431 477h1v1h-1zM431 493h1v1h-1zM431 509h1v1h-1zM431 526h1v1h-1zM431 542h1v1h-1zM431 558h1v1h-1zM431 574h1v1h-1zM431 590h1v1h-1zM431 607h1v1h-1zM431 623h1v1h-1zM431 639h1v1h-1zM431 655h1v1h-1zM431 671h1v1h-1zM431 688h1v1h-1zM431 704h1v1h-1zM431 720h1v1h-1zM431 736h1v1h-1zM431 752h1v1h-1zM431 769h1v1h-1zM431 785h1v1h-1zM431 801h1v1h-1zM431 817h1v1h-1zM431 833h1v1h-1zM431 850h1v1h-1zM431 866h1v1h-1zM431 882h1v1h-1zM431 898h1v1h-1zM431 914h1v1h-1zM431 931h1v1h-1zM447 7h1v1h-1zM447 23h1v1h-1zM447 40h1v1h-1zM447 56h1v1h-1zM447 72h1v1h-1zM447 88h1v1h-1zM447 104h1v1h-1zM447 120h1v1h-1zM447 137h1v1h-1zM447 153h1v1h-1zM447 169h1v1h-1zM447 185h1v1h-1zM447 201h1v1h-1zM447 218h1v1h-1zM447 234h1v1h-1zM447 250h1v1h-1zM447 266h1v1h-1zM447 283h1v1h-1zM447 299h1v1h-1zM447 315h1v1h-1zM447 331h1v1h-1zM447 347h1v1h-1zM447 364h1v1h-1zM447 380h1v1h-1zM447 396h1v1h-1zM447 412h1v1h-1zM447 428h1v1h-1zM447 445h1v1h-1zM447 461h1v1h-1zM447 477h1v1h-1zM447 493h1v1h-1zM447 509h1v1h-1zM447 526h1v1h-1zM447 542h1v1h-1zM447 558h1v1h-1zM447 574h1v1h-1zM447 590h1v1h-1zM447 607h1v1h-1zM447 623h1v1h-1zM447 639h1v1h-1zM447 655h1v1h-1zM447 671h1v1h-1zM447 688h1v1h-1zM447 704h1v1h-1zM447 720h1v1h-1zM447 736h1v1h-1zM447 752h1v1h-1zM447 769h1v1h-1zM447 785h1v1h-1zM447 801h1v1h-1zM447 817h1v1h-1zM447 833h1v1h-1zM447 850h1v1h-1zM447 866h1v1h-1zM447 882h1v1h-1zM447 898h1v1h-1zM447 914h1v1h-1zM447 931h1v1h-1zM463 7h1v1h-1zM463 23h1v1h-1zM463 40h1v1h-1zM463 56h1v1h-1zM463 72h1v1h-1zM463 88h1v1h-1zM463 104h1v1h-1zM463 120h1v1h-1zM463 137h1v1h-1zM463 153h1v1h-1zM463 169h1v1h-1zM463 185h1v1h-1zM463 201h1v1h-1zM463 218h1v1h-1zM463 234h1v1h-1zM463 250h1v1h-1zM463 266h1v1h-1zM463 283h1v1h-1zM463 299h1v1h-1zM463 315h1v1h-1zM463 331h1v1h-1zM463 347h1v1h-1zM463 364h1v1h-1zM463 380h1v1h-1zM463 396h1v1h-1zM463 412h1v1h-1zM463 428h1v1h-1zM463 445h1v1h-1zM463 461h1v1h-1zM463 477h1v1h-1zM463 493h1v1h-1zM463 509h1v1h-1zM463 526h1v1h-1zM463 542h1v1h-1zM463 558h1v1h-1zM463 574h1v1h-1zM463 590h1v1h-1zM463 607h1v1h-1zM463 623h1v1h-1zM463 639h1v1h-1zM463 655h1v1h-1zM463 671h1v1h-1zM463 688h1v1h-1zM463 704h1v1h-1zM463 720h1v1h-1zM463 736h1v1h-1zM463 752h1v1h-1zM463 769h1v1h-1zM463 785h1v1h-1zM463 801h1v1h-1zM463 817h1v1h-1zM463 833h1v1h-1zM463 850h1v1h-1zM463 866h1v1h-1zM463 882h1v1h-1zM463 898h1v1h-1zM463 914h1v1h-1zM463 931h1v1h-1zM479 7h1v1h-1zM479 23h1v1h-1zM479 40h1v1h-1zM479 56h1v1h-1zM479 72h1v1h-1zM479 88h1v1h-1zM479 104h1v1h-1zM479 120h1v1h-1zM479 137h1v1h-1zM479 153h1v1h-1zM479 169h1v1h-1zM479 185h1v1h-1zM479 201h1v1h-1zM479 218h1v1h-1zM479 234h1v1h-1zM479 250h1v1h-1zM479 266h1v1h-1zM479 283h1v1h-1zM479 299h1v1h-1zM479 315h1v1h-1zM479 331h1v1h-1zM479 347h1v1h-1zM479 364h1v1h-1zM479 380h1v1h-1zM479 396h1v1h-1zM479 412h1v1h-1zM479 428h1v1h-1zM479 445h1v1h-1zM479 461h1v1h-1zM479 477h1v1h-1zM479 493h1v1h-1zM479 509h1v1h-1zM479 526h1v1h-1zM479 542h1v1h-1zM479 558h1v1h-1zM479 574h1v1h-1zM479 590h1v1h-1zM479 607h1v1h-1zM479 623h1v1h-1zM479 639h1v1h-1zM479 655h1v1h-1zM479 671h1v1h-1zM479 688h1v1h-1zM479 704h1v1h-1zM479 720h1v1h-1zM479 736h1v1h-1zM479 752h1v1h-1zM479 769h1v1h-1zM479 785h1v1h-1zM479 801h1v1h-1zM479 817h1v1h-1zM479 833h1v1h-1zM479 850h1v1h-1zM479 866h1v1h-1zM479 882h1v1h-1zM479 898h1v1h-1zM479 914h1v1h-1zM479 931h1v1h-1zM496 7h1v1h-1zM496 23h1v1h-1zM496 40h1v1h-1zM496 56h1v1h-1zM496 72h1v1h-1zM496 88h1v1h-1zM496 104h1v1h-1zM496 120h1v1h-1zM496 137h1v1h-1zM496 153h1v1h-1zM496 169h1v1h-1zM496 185h1v1h-1zM496 201h1v1h-1zM496 218h1v1h-1zM496 234h1v1h-1zM496 250h1v1h-1zM496 266h1v1h-1zM496 283h1v1h-1zM496 299h1v1h-1zM496 315h1v1h-1zM496 331h1v1h-1zM496 347h1v1h-1zM496 364h1v1h-1zM496 380h1v1h-1zM496 396h1v1h-1zM496 412h1v1h-1zM496 428h1v1h-1zM496 445h1v1h-1zM496 461h1v1h-1zM496 477h1v1h-1zM496 493h1v1h-1zM496 509h1v1h-1zM496 526h1v1h-1zM496 542h1v1h-1zM496 558h1v1h-1zM496 574h1v1h-1zM496 590h1v1h-1zM496 607h1v1h-1zM496 623h1v1h-1zM496 639h1v1h-1zM496 655h1v1h-1zM496 671h1v1h-1zM496 688h1v1h-1zM496 704h1v1h-1zM496 720h1v1h-1zM496 736h1v1h-1zM496 752h1v1h-1zM496 769h1v1h-1zM496 785h1v1h-1zM496 801h1v1h-1zM496 817h1v1h-1zM496 833h1v1h-1zM496 850h1v1h-1zM496 866h1v1h-1zM496 882h1v1h-1zM496 898h1v1h-1zM496 914h1v1h-1zM496 931h1v1h-1zM512 7h1v1h-1zM512 23h1v1h-1zM512 40h1v1h-1zM512 56h1v1h-1zM512 72h1v1h-1zM512 88h1v1h-1zM512 104h1v1h-1zM512 120h1v1h-1zM512 137h1v1h-1zM512 153h1v1h-1zM512 169h1v1h-1zM512 185h1v1h-1zM512 201h1v1h-1zM512 218h1v1h-1zM512 234h1v1h-1zM512 250h1v1h-1zM512 266h1v1h-1zM512 283h1v1h-1zM512 299h1v1h-1zM512 315h1v1h-1zM512 331h1v1h-1zM512 347h1v1h-1zM512 364h1v1h-1zM512 380h1v1h-1zM512 396h1v1h-1zM512 412h1v1h-1zM512 428h1v1h-1zM512 445h1v1h-1zM512 461h1v1h-1zM512 477h1v1h-1zM512 493h1v1h-1zM512 509h1v1h-1zM512 526h1v1h-1zM512 542h1v1h-1zM512 558h1v1h-1zM512 574h1v1h-1zM512 590h1v1h-1zM512 607h1v1h-1zM512 623h1v1h-1zM512 639h1v1h-1zM512 655h1v1h-1zM512 671h1v1h-1zM512 688h1v1h-1zM512 704h1v1h-1zM512 720h1v1h-1zM512 736h1v1h-1zM512 752h1v1h-1zM512 769h1v1h-1zM512 785h1v1h-1zM512 801h1v1h-1zM512 817h1v1h-1zM512 833h1v1h-1zM512 850h1v1h-1zM512 866h1v1h-1zM512 882h1v1h-1zM512 898h1v1h-1zM512 914h1v1h-1zM512 931h1v1h-1zM528 7h1v1h-1zM528 23h1v1h-1zM528 40h1v1h-1zM528 56h1v1h-1zM528 72h1v1h-1zM528 88h1v1h-1zM528 104h1v1h-1zM528 120h1v1h-1zM528 137h1v1h-1zM528 153h1v1h-1zM528 169h1v1h-1zM528 185h1v1h-1zM528 201h1v1h-1zM528 218h1v1h-1zM528 234h1v1h-1zM528 250h1v1h-1zM528 266h1v1h-1zM528 283h1v1h-1zM528 299h1v1h-1zM528 315h1v1h-1zM528 331h1v1h-1zM528 347h1v1h-1zM528 364h1v1h-1zM528 380h1v1h-1zM528 396h1v1h-1zM528 412h1v1h-1zM528 428h1v1h-1zM528 445h1v1h-1zM528 461h1v1h-1zM528 477h1v1h-1zM528 493h1v1h-1zM528 509h1v1h-1zM528 526h1v1h-1zM528 542h1v1h-1zM528 558h1v1h-1zM528 574h1v1h-1zM528 590h1v1h-1zM528 607h1v1h-1zM528 623h1v1h-1zM528 639h1v1h-1zM528 655h1v1h-1zM528 671h1v1h-1zM528 688h1v1h-1zM528 704h1v1h-1zM528 720h1v1h-1zM528 736h1v1h-1zM528 752h1v1h-1zM528 769h1v1h-1zM528 785h1v1h-1zM528 801h1v1h-1zM528 817h1v1h-1zM528 833h1v1h-1zM528 850h1v1h-1zM528 866h1v1h-1zM528 882h1v1h-1zM528 898h1v1h-1zM528 914h1v1h-1zM528 931h1v1h-1zM544 7h1v1h-1zM544 23h1v1h-1zM544 40h1v1h-1zM544 56h1v1h-1zM544 72h1v1h-1zM544 88h1v1h-1zM544 104h1v1h-1zM544 120h1v1h-1zM544 137h1v1h-1zM544 153h1v1h-1zM544 169h1v1h-1zM544 185h1v1h-1zM544 201h1v1h-1zM544 218h1v1h-1zM544 234h1v1h-1zM544 250h1v1h-1zM544 266h1v1h-1zM544 283h1v1h-1zM544 299h1v1h-1zM544 315h1v1h-1zM544 331h1v1h-1zM544 347h1v1h-1zM544 364h1v1h-1zM544 380h1v1h-1zM544 396h1v1h-1zM544 412h1v1h-1zM544 428h1v1h-1zM544 445h1v1h-1zM544 461h1v1h-1zM544 477h1v1h-1zM544 493h1v1h-1zM544 509h1v1h-1zM544 526h1v1h-1zM544 542h1v1h-1zM544 558h1v1h-1zM544 574h1v1h-1zM544 590h1v1h-1zM544 607h1v1h-1zM544 623h1v1h-1zM544 639h1v1h-1zM544 655h1v1h-1zM544 671h1v1h-1zM544 688h1v1h-1zM544 704h1v1h-1zM544 720h1v1h-1zM544 736h1v1h-1zM544 752h1v1h-1zM544 769h1v1h-1zM544 785h1v1h-1zM544 801h1v1h-1zM544 817h1v1h-1zM544 833h1v1h-1zM544 850h1v1h-1zM544 866h1v1h-1zM544 882h1v1h-1zM544 898h1v1h-1zM544 914h1v1h-1zM544 931h1v1h-1zM560 7h1v1h-1zM560 23h1v1h-1zM560 40h1v1h-1zM560 56h1v1h-1zM560 72h1v1h-1zM560 88h1v1h-1zM560 104h1v1h-1zM560 120h1v1h-1zM560 137h1v1h-1zM560 153h1v1h-1zM560 169h1v1h-1zM560 185h1v1h-1zM560 201h1v1h-1zM560 218h1v1h-1zM560 234h1v1h-1zM560 250h1v1h-1zM560 266h1v1h-1zM560 283h1v1h-1zM560 299h1v1h-1zM560 315h1v1h-1zM560 331h1v1h-1zM560 347h1v1h-1zM560 364h1v1h-1zM560 380h1v1h-1zM560 396h1v1h-1zM560 412h1v1h-1zM560 428h1v1h-1zM560 445h1v1h-1zM560 461h1v1h-1zM560 477h1v1h-1zM560 493h1v1h-1zM560 509h1v1h-1zM560 526h1v1h-1zM560 542h1v1h-1zM560 558h1v1h-1zM560 574h1v1h-1zM560 590h1v1h-1zM560 607h1v1h-1zM560 623h1v1h-1zM560 639h1v1h-1zM560 655h1v1h-1zM560 671h1v1h-1zM560 688h1v1h-1zM560 704h1v1h-1zM560 720h1v1h-1zM560 736h1v1h-1zM560 752h1v1h-1zM560 769h1v1h-1zM560 785h1v1h-1zM560 801h1v1h-1zM560 817h1v1h-1zM560 833h1v1h-1zM560 850h1v1h-1zM560 866h1v1h-1zM560 882h1v1h-1zM560 898h1v1h-1zM560 914h1v1h-1zM560 931h1v1h-1zM577 7h1v1h-1zM577 23h1v1h-1zM577 40h1v1h-1zM577 56h1v1h-1zM577 72h1v1h-1zM577 88h1v1h-1zM577 104h1v1h-1zM577 120h1v1h-1zM577 137h1v1h-1zM577 153h1v1h-1zM577 169h1v1h-1zM577 185h1v1h-1zM577 201h1v1h-1zM577 218h1v1h-1zM577 234h1v1h-1zM577 250h1v1h-1zM577 266h1v1h-1zM577 283h1v1h-1zM577 299h1v1h-1zM577 315h1v1h-1zM577 331h1v1h-1zM577 347h1v1h-1zM577 364h1v1h-1zM577 380h1v1h-1zM577 396h1v1h-1zM577 412h1v1h-1zM577 428h1v1h-1zM577 445h1v1h-1zM577 461h1v1h-1zM577 477h1v1h-1zM577 493h1v1h-1zM577 509h1v1h-1zM577 526h1v1h-1zM577 542h1v1h-1zM577 558h1v1h-1zM577 574h1v1h-1zM577 590h1v1h-1zM577 607h1v1h-1zM577 623h1v1h-1zM577 639h1v1h-1zM577 655h1v1h-1zM577 671h1v1h-1zM577 688h1v1h-1zM577 704h1v1h-1zM577 720h1v1h-1zM577 736h1v1h-1zM577 752h1v1h-1zM577 769h1v1h-1zM577 785h1v1h-1zM577 801h1v1h-1zM577 817h1v1h-1zM577 833h1v1h-1zM577 850h1v1h-1zM577 866h1v1h-1zM577 882h1v1h-1zM577 898h1v1h-1zM577 914h1v1h-1zM577 931h1v1h-1zM593 7h1v1h-1zM593 23h1v1h-1zM593 40h1v1h-1zM593 56h1v1h-1zM593 72h1v1h-1zM593 88h1v1h-1zM593 104h1v1h-1zM593 120h1v1h-1zM593 137h1v1h-1zM593 153h1v1h-1zM593 169h1v1h-1zM593 185h1v1h-1zM593 201h1v1h-1zM593 218h1v1h-1zM593 234h1v1h-1zM593 250h1v1h-1zM593 266h1v1h-1zM593 283h1v1h-1zM593 299h1v1h-1zM593 315h1v1h-1zM593 331h1v1h-1zM593 347h1v1h-1zM593 364h1v1h-1zM593 380h1v1h-1zM593 396h1v1h-1zM593 412h1v1h-1zM593 428h1v1h-1zM593 445h1v1h-1zM593 461h1v1h-1zM593 477h1v1h-1zM593 493h1v1h-1zM593 509h1v1h-1zM593 526h1v1h-1zM593 542h1v1h-1zM593 558h1v1h-1zM593 574h1v1h-1zM593 590h1v1h-1zM593 607h1v1h-1zM593 623h1v1h-1zM593 639h1v1h-1zM593 655h1v1h-1zM593 671h1v1h-1zM593 688h1v1h-1zM593 704h1v1h-1zM593 720h1v1h-1zM593 736h1v1h-1zM593 752h1v1h-1zM593 769h1v1h-1zM593 785h1v1h-1zM593 801h1v1h-1zM593 817h1v1h-1zM593 833h1v1h-1zM593 850h1v1h-1zM593 866h1v1h-1zM593 882h1v1h-1zM593 898h1v1h-1zM593 914h1v1h-1zM593 931h1v1h-1zM609 7h1v1h-1zM609 23h1v1h-1zM609 40h1v1h-1zM609 56h1v1h-1zM609 72h1v1h-1zM609 88h1v1h-1zM609 104h1v1h-1zM609 120h1v1h-1zM609 137h1v1h-1zM609 153h1v1h-1zM609 169h1v1h-1zM609 185h1v1h-1zM609 201h1v1h-1zM609 218h1v1h-1zM609 234h1v1h-1zM609 250h1v1h-1zM609 266h1v1h-1zM609 283h1v1h-1zM609 299h1v1h-1zM609 315h1v1h-1zM609 331h1v1h-1zM609 347h1v1h-1zM609 364h1v1h-1zM609 380h1v1h-1zM609 396h1v1h-1zM609 412h1v1h-1zM609 428h1v1h-1zM609 445h1v1h-1zM609 461h1v1h-1zM609 477h1v1h-1zM609 493h1v1h-1zM609 509h1v1h-1zM609 526h1v1h-1zM609 542h1v1h-1zM609 558h1v1h-1zM609 574h1v1h-1zM609 590h1v1h-1zM609 607h1v1h-1zM609 623h1v1h-1zM609 639h1v1h-1zM609 655h1v1h-1zM609 671h1v1h-1zM609 688h1v1h-1zM609 704h1v1h-1zM609 720h1v1h-1zM609 736h1v1h-1zM609 752h1v1h-1zM609 769h1v1h-1zM609 785h1v1h-1zM609 801h1v1h-1zM609 817h1v1h-1zM609 833h1v1h-1zM609 850h1v1h-1zM609 866h1v1h-1zM609 882h1v1h-1zM609 898h1v1h-1zM609 914h1v1h-1zM609 931h1v1h-1zM625 7h1v1h-1zM625 23h1v1h-1zM625 40h1v1h-1zM625 56h1v1h-1zM625 72h1v1h-1zM625 88h1v1h-1zM625 104h1v1h-1zM625 120h1v1h-1zM625 137h1v1h-1zM625 153h1v1h-1zM625 169h1v1h-1zM625 185h1v1h-1zM625 201h1v1h-1zM625 218h1v1h-1zM625 234h1v1h-1zM625 250h1v1h-1zM625 266h1v1h-1zM625 283h1v1h-1zM625 299h1v1h-1zM625 315h1v1h-1zM625 331h1v1h-1zM625 347h1v1h-1zM625 364h1v1h-1zM625 380h1v1h-1zM625 396h1v1h-1zM625 412h1v1h-1zM625 428h1v1h-1zM625 445h1v1h-1zM625 461h1v1h-1zM625 477h1v1h-1zM625 493h1v1h-1zM625 509h1v1h-1zM625 526h1v1h-1zM625 542h1v1h-1zM625 558h1v1h-1zM625 574h1v1h-1zM625 590h1v1h-1zM625 607h1v1h-1zM625 623h1v1h-1zM625 639h1v1h-1zM625 655h1v1h-1zM625 671h1v1h-1zM625 688h1v1h-1zM625 704h1v1h-1zM625 720h1v1h-1zM625 736h1v1h-1zM625 752h1v1h-1zM625 769h1v1h-1zM625 785h1v1h-1zM625 801h1v1h-1zM625 817h1v1h-1zM625 833h1v1h-1zM625 850h1v1h-1zM625 866h1v1h-1zM625 882h1v1h-1zM625 898h1v1h-1zM625 914h1v1h-1zM625 931h1v1h-1zM641 7h1v1h-1zM641 23h1v1h-1zM641 40h1v1h-1zM641 56h1v1h-1zM641 72h1v1h-1zM641 88h1v1h-1zM641 104h1v1h-1zM641 120h1v1h-1zM641 137h1v1h-1zM641 153h1v1h-1zM641 169h1v1h-1zM641 185h1v1h-1zM641 201h1v1h-1zM641 218h1v1h-1zM641 234h1v1h-1zM641 250h1v1h-1zM641 266h1v1h-1zM641 283h1v1h-1zM641 299h1v1h-1zM641 315h1v1h-1zM641 331h1v1h-1zM641 347h1v1h-1zM641 364h1v1h-1zM641 380h1v1h-1zM641 396h1v1h-1zM641 412h1v1h-1zM641 428h1v1h-1zM641 445h1v1h-1zM641 461h1v1h-1zM641 477h1v1h-1zM641 493h1v1h-1zM641 509h1v1h-1zM641 526h1v1h-1zM641 542h1v1h-1zM641 558h1v1h-1zM641 574h1v1h-1zM641 590h1v1h-1zM641 607h1v1h-1zM641 623h1v1h-1zM641 639h1v1h-1zM641 655h1v1h-1zM641 671h1v1h-1zM641 688h1v1h-1zM641 704h1v1h-1zM641 720h1v1h-1zM641 736h1v1h-1zM641 752h1v1h-1zM641 769h1v1h-1zM641 785h1v1h-1zM641 801h1v1h-1zM641 817h1v1h-1zM641 833h1v1h-1zM641 850h1v1h-1zM641 866h1v1h-1zM641 882h1v1h-1zM641 898h1v1h-1zM641 914h1v1h-1zM641 931h1v1h-1zM658 7h1v1h-1zM658 23h1v1h-1zM658 40h1v1h-1zM658 56h1v1h-1zM658 72h1v1h-1zM658 88h1v1h-1zM658 104h1v1h-1zM658 120h1v1h-1zM658 137h1v1h-1zM658 153h1v1h-1zM658 169h1v1h-1zM658 185h1v1h-1zM658 201h1v1h-1zM658 218h1v1h-1zM658 234h1v1h-1zM658 250h1v1h-1zM658 266h1v1h-1zM658 283h1v1h-1zM658 299h1v1h-1zM658 315h1v1h-1zM658 331h1v1h-1zM658 347h1v1h-1zM658 364h1v1h-1zM658 380h1v1h-1zM658 396h1v1h-1zM658 412h1v1h-1zM658 428h1v1h-1zM658 445h1v1h-1zM658 461h1v1h-1zM658 477h1v1h-1zM658 493h1v1h-1zM658 509h1v1h-1zM658 526h1v1h-1zM658 542h1v1h-1zM658 558h1v1h-1zM658 574h1v1h-1zM658 590h1v1h-1zM658 607h1v1h-1zM658 623h1v1h-1zM658 639h1v1h-1zM658 655h1v1h-1zM658 671h1v1h-1zM658 688h1v1h-1zM658 704h1v1h-1zM658 720h1v1h-1zM658 736h1v1h-1zM658 752h1v1h-1zM658 769h1v1h-1zM658 785h1v1h-1zM658 801h1v1h-1zM658 817h1v1h-1zM658 833h1v1h-1zM658 850h1v1h-1zM658 866h1v1h-1zM658 882h1v1h-1zM658 898h1v1h-1zM658 914h1v1h-1zM658 931h1v1h-1zM674 7h1v1h-1zM674 23h1v1h-1zM674 40h1v1h-1zM674 56h1v1h-1zM674 72h1v1h-1zM674 88h1v1h-1zM674 104h1v1h-1zM674 120h1v1h-1zM674 137h1v1h-1zM674 153h1v1h-1zM674 169h1v1h-1zM674 185h1v1h-1zM674 201h1v1h-1zM674 218h1v1h-1zM674 234h1v1h-1zM674 250h1v1h-1zM674 266h1v1h-1zM674 283h1v1h-1zM674 299h1v1h-1zM674 315h1v1h-1zM674 331h1v1h-1zM674 347h1v1h-1zM674 364h1v1h-1zM674 380h1v1h-1zM674 396h1v1h-1zM674 412h1v1h-1zM674 428h1v1h-1zM674 445h1v1h-1zM674 461h1v1h-1zM674 477h1v1h-1zM674 493h1v1h-1zM674 509h1v1h-1zM674 526h1v1h-1zM674 542h1v1h-1zM674 558h1v1h-1zM674 574h1v1h-1zM674 590h1v1h-1zM674 607h1v1h-1zM674 623h1v1h-1zM674 639h1v1h-1zM674 655h1v1h-1zM674 671h1v1h-1zM674 688h1v1h-1zM674 704h1v1h-1zM674 720h1v1h-1zM674 736h1v1h-1zM674 752h1v1h-1zM674 769h1v1h-1zM674 785h1v1h-1zM674 801h1v1h-1zM674 817h1v1h-1zM674 833h1v1h-1zM674 850h1v1h-1zM674 866h1v1h-1zM674 882h1v1h-1zM674 898h1v1h-1zM674 914h1v1h-1zM674 931h1v1h-1z" fill="#acacac"/>
<path d="M204.5 323.5 L309.5 323.5" stroke="#009600" stroke-width="1.3" fill="none" stroke-linejoin="round" stroke-linecap="square"/>
<path d="M204.5 339.5 L309.5 339.5" stroke="#009600" stroke-width="1.3" fill="none" stroke-linejoin="round" stroke-linecap="square"/>
<path d="M293.5 307.5 L293.5 323.5" stroke="#009600" stroke-width="1.3" fill="none" stroke-linejoin="round" stroke-linecap="square"/>
<path d="M236.5 307.5 L236.5 339.5" stroke="#009600" stroke-width="1.3" fill="none" stroke-linejoin="round" stroke-linecap="square"/>
<path d="M236.5 445.5 L236.5 469.5 L309.5 469.5" stroke="#009600" stroke-width="1.3" fill="none" stroke-linejoin="round" stroke-linecap="square"/>
<path d="M423.5 218.5 L423.5 274.5" stroke="#009600" stroke-width="1.3" fill="none" stroke-linejoin="round" stroke-linecap="square"/>
<path d="M415.5 258.5 L423.5 258.5" stroke="#009600" stroke-width="1.3" fill="none" stroke-linejoin="round" stroke-linecap="square"/>
<path d="M382.5 258.5 L374.5 258.5" stroke="#009600" stroke-width="1.3" fill="none" stroke-linejoin="round" stroke-linecap="square"/>
<path d="M34.5 461.5 L34.5 590.5" stroke="#009600" stroke-width="1.3" fill="none" stroke-linejoin="round" stroke-linecap="square"/>
<path d="M91.5 461.5 L91.5 590.5" stroke="#009600" stroke-width="1.3" fill="none" stroke-linejoin="round" stroke-linecap="square"/>
<path d="M147.5 461.5 L147.5 590.5" stroke="#009600" stroke-width="1.3" fill="none" stroke-linejoin="round" stroke-linecap="square"/>
<path d="M34.5 550.5 L309.5 550.5" stroke="#009600" stroke-width="1.3" fill="none" stroke-linejoin="round" stroke-linecap="square"/>
<path d="M91.5 566.5 L309.5 566.5" stroke="#009600" stroke-width="1.3" fill="none" stroke-linejoin="round" stroke-linecap="square"/>
<path d="M147.5 582.5 L309.5 582.5" stroke="#009600" stroke-width="1.3" fill="none" stroke-linejoin="round" stroke-linecap="square"/>
<path d="M536.5 469.5 L706.5 469.5" stroke="#009600" stroke-width="1.3" fill="none" stroke-linejoin="round" stroke-linecap="square"/>
<path d="M536.5 323.5 L552.5 323.5 L552.5 15.5 L706.5 15.5" stroke="#009600" stroke-width="1.3" fill="none" stroke-linejoin="round" stroke-linecap="square"/>
<path d="M536.5 339.5 L569.5 339.5 L569.5 80.5 L706.5 80.5" stroke="#009600" stroke-width="1.3" fill="none" stroke-linejoin="round" stroke-linecap="square"/>
<path d="M536.5 355.5 L585.5 355.5 L585.5 145.5 L706.5 145.5" stroke="#009600" stroke-width="1.3" fill="none" stroke-linejoin="round" stroke-linecap="square"/>
<path d="M536.5 372.5 L601.5 372.5 L601.5 210.5 L706.5 210.5" stroke="#009600" stroke-width="1.3" fill="none" stroke-linejoin="round" stroke-linecap="square"/>
<path d="M536.5 388.5 L617.5 388.5 L617.5 274.5 L706.5 274.5" stroke="#009600" stroke-width="1.3" fill="none" stroke-linejoin="round" stroke-linecap="square"/>
<path d="M536.5 404.5 L633.5 404.5 L633.5 339.5 L706.5 339.5" stroke="#009600" stroke-width="1.3" fill="none" stroke-linejoin="round" stroke-linecap="square"/>
<path d="M536.5 420.5 L650.5 420.5 L650.5 404.5 L706.5 404.5" stroke="#009600" stroke-width="1.3" fill="none" stroke-linejoin="round" stroke-linecap="square"/>
<path d="M536.5 485.5 L666.5 485.5 L666.5 534.5 L706.5 534.5" stroke="#009600" stroke-width="1.3" fill="none" stroke-linejoin="round" stroke-linecap="square"/>
<path d="M536.5 501.5 L650.5 501.5 L650.5 598.5 L706.5 598.5" stroke="#009600" stroke-width="1.3" fill="none" stroke-linejoin="round" stroke-linecap="square"/>
<path d="M536.5 517.5 L633.5 517.5 L633.5 663.5 L706.5 663.5" stroke="#009600" stroke-width="1.3" fill="none" stroke-linejoin="round" stroke-linecap="square"/>
<path d="M536.5 534.5 L617.5 534.5 L617.5 728.5 L706.5 728.5" stroke="#009600" stroke-width="1.3" fill="none" stroke-linejoin="round" stroke-linecap="square"/>
<path d="M536.5 550.5 L601.5 550.5 L601.5 793.5 L706.5 793.5" stroke="#009600" stroke-width="1.3" fill="none" stroke-linejoin="round" stroke-linecap="square"/>
<path d="M536.5 566.5 L585.5 566.5 L585.5 858.5 L706.5 858.5" stroke="#009600" stroke-width="1.3" fill="none" stroke-linejoin="round" stroke-linecap="square"/>
<circle cx="293.5" cy="323.5" r="3" fill="#009600"/>
<circle cx="236.5" cy="339.5" r="3" fill="#009600"/>
<circle cx="423.5" cy="258.5" r="3" fill="#009600"/>
<circle cx="34.5" cy="550.5" r="3" fill="#009600"/>
<circle cx="91.5" cy="566.5" r="3" fill="#009600"/>
<circle cx="147.5" cy="582.5" r="3" fill="#009600"/>
<rect x="288.8" y="280.16" width="9.4" height="22.68" fill="none" stroke="#840000" stroke-width="1.4"/>
<path d="M293.5 274.5 L293.5 279.5" stroke="#840000" stroke-width="1.4" fill="none" stroke-linejoin="round" stroke-linecap="round"/>
<path d="M293.5 302.5 L293.5 307.5" stroke="#840000" stroke-width="1.4" fill="none" stroke-linejoin="round" stroke-linecap="round"/>
<text x="311" y="284.2" fill="#006464" font-size="12.2" text-anchor="start" dominant-baseline="central" letter-spacing="0.55">R1</text>
<text x="311" y="300.2" fill="#006464" font-size="12.2" text-anchor="start" dominant-baseline="central" letter-spacing="0.55">10k</text>
<rect x="231.8" y="280.16" width="9.4" height="22.68" fill="none" stroke="#840000" stroke-width="1.4"/>
<path d="M236.5 274.5 L236.5 279.5" stroke="#840000" stroke-width="1.4" fill="none" stroke-linejoin="round" stroke-linecap="round"/>
<path d="M236.5 302.5 L236.5 307.5" stroke="#840000" stroke-width="1.4" fill="none" stroke-linejoin="round" stroke-linecap="round"/>
<text x="254" y="284.2" fill="#006464" font-size="12.2" text-anchor="start" dominant-baseline="central" letter-spacing="0.55">R2</text>
<text x="254" y="300.2" fill="#006464" font-size="12.2" text-anchor="start" dominant-baseline="central" letter-spacing="0.55">10k</text>
<rect x="231.8" y="417.16" width="9.4" height="22.68" fill="none" stroke="#840000" stroke-width="1.4"/>
<path d="M236.5 412.5 L236.5 417.5" stroke="#840000" stroke-width="1.4" fill="none" stroke-linejoin="round" stroke-linecap="round"/>
<path d="M236.5 440.5 L236.5 445.5" stroke="#840000" stroke-width="1.4" fill="none" stroke-linejoin="round" stroke-linecap="round"/>
<text x="254" y="421.2" fill="#006464" font-size="12.2" text-anchor="start" dominant-baseline="central" letter-spacing="0.55">R3</text>
<text x="254" y="437.2" fill="#006464" font-size="12.2" text-anchor="start" dominant-baseline="central" letter-spacing="0.55">10k</text>
<rect x="29.8" y="596.16" width="9.4" height="22.68" fill="none" stroke="#840000" stroke-width="1.4"/>
<path d="M34.5 590.5 L34.5 595.5" stroke="#840000" stroke-width="1.4" fill="none" stroke-linejoin="round" stroke-linecap="round"/>
<path d="M34.5 618.5 L34.5 623.5" stroke="#840000" stroke-width="1.4" fill="none" stroke-linejoin="round" stroke-linecap="round"/>
<text x="52" y="600.2" fill="#006464" font-size="12.2" text-anchor="start" dominant-baseline="central" letter-spacing="0.55">R4</text>
<text x="52" y="616.2" fill="#006464" font-size="12.2" text-anchor="start" dominant-baseline="central" letter-spacing="0.55">10k</text>
<rect x="86.8" y="596.16" width="9.4" height="22.68" fill="none" stroke="#840000" stroke-width="1.4"/>
<path d="M91.5 590.5 L91.5 595.5" stroke="#840000" stroke-width="1.4" fill="none" stroke-linejoin="round" stroke-linecap="round"/>
<path d="M91.5 618.5 L91.5 623.5" stroke="#840000" stroke-width="1.4" fill="none" stroke-linejoin="round" stroke-linecap="round"/>
<text x="109" y="600.2" fill="#006464" font-size="12.2" text-anchor="start" dominant-baseline="central" letter-spacing="0.55">R5</text>
<text x="109" y="616.2" fill="#006464" font-size="12.2" text-anchor="start" dominant-baseline="central" letter-spacing="0.55">10k</text>
<rect x="142.8" y="596.16" width="9.4" height="22.68" fill="none" stroke="#840000" stroke-width="1.4"/>
<path d="M147.5 590.5 L147.5 595.5" stroke="#840000" stroke-width="1.4" fill="none" stroke-linejoin="round" stroke-linecap="round"/>
<path d="M147.5 618.5 L147.5 623.5" stroke="#840000" stroke-width="1.4" fill="none" stroke-linejoin="round" stroke-linecap="round"/>
<text x="165" y="600.2" fill="#006464" font-size="12.2" text-anchor="start" dominant-baseline="central" letter-spacing="0.55">R6</text>
<text x="165" y="616.2" fill="#006464" font-size="12.2" text-anchor="start" dominant-baseline="central" letter-spacing="0.55">10k</text>
<path d="M236.5 274.5 L236.5 258.5" stroke="#840000" stroke-width="1.4" fill="none" stroke-linejoin="round" stroke-linecap="round"/>
<path d="M232.5 266.5 L236.5 258.5 L241.5 266.5" stroke="#840000" stroke-width="1.4" fill="none" stroke-linejoin="round" stroke-linecap="round"/>
<text x="236.5" y="243.2" fill="#006464" font-size="12.2" text-anchor="middle" dominant-baseline="central" letter-spacing="0.55">+3V3</text>
<path d="M293.5 274.5 L293.5 258.5" stroke="#840000" stroke-width="1.4" fill="none" stroke-linejoin="round" stroke-linecap="round"/>
<path d="M288.5 266.5 L293.5 258.5 L298.5 266.5" stroke="#840000" stroke-width="1.4" fill="none" stroke-linejoin="round" stroke-linecap="round"/>
<text x="293.5" y="243.2" fill="#006464" font-size="12.2" text-anchor="middle" dominant-baseline="central" letter-spacing="0.55">+3V3</text>
<path d="M236.5 412.5 L236.5 396.5" stroke="#840000" stroke-width="1.4" fill="none" stroke-linejoin="round" stroke-linecap="round"/>
<path d="M232.5 404.5 L236.5 396.5 L241.5 404.5" stroke="#840000" stroke-width="1.4" fill="none" stroke-linejoin="round" stroke-linecap="round"/>
<text x="236.5" y="381.2" fill="#006464" font-size="12.2" text-anchor="middle" dominant-baseline="central" letter-spacing="0.55">+3V3</text>
<path d="M423.5 218.5 L423.5 201.5" stroke="#840000" stroke-width="1.4" fill="none" stroke-linejoin="round" stroke-linecap="round"/>
<path d="M418.5 210.5 L423.5 201.5 L428.5 210.5" stroke="#840000" stroke-width="1.4" fill="none" stroke-linejoin="round" stroke-linecap="round"/>
<text x="423.5" y="186.2" fill="#006464" font-size="12.2" text-anchor="middle" dominant-baseline="central" letter-spacing="0.55">+3V3</text>
<path d="M34.5 412.5 L34.5 396.5" stroke="#840000" stroke-width="1.4" fill="none" stroke-linejoin="round" stroke-linecap="round"/>
<path d="M29.5 404.5 L34.5 396.5 L39.5 404.5" stroke="#840000" stroke-width="1.4" fill="none" stroke-linejoin="round" stroke-linecap="round"/>
<text x="34.5" y="381.2" fill="#006464" font-size="12.2" text-anchor="middle" dominant-baseline="central" letter-spacing="0.55">+3V3</text>
<path d="M91.5 412.5 L91.5 396.5" stroke="#840000" stroke-width="1.4" fill="none" stroke-linejoin="round" stroke-linecap="round"/>
<path d="M86.5 404.5 L91.5 396.5 L95.5 404.5" stroke="#840000" stroke-width="1.4" fill="none" stroke-linejoin="round" stroke-linecap="round"/>
<text x="91.5" y="381.2" fill="#006464" font-size="12.2" text-anchor="middle" dominant-baseline="central" letter-spacing="0.55">+3V3</text>
<path d="M147.5 412.5 L147.5 396.5" stroke="#840000" stroke-width="1.4" fill="none" stroke-linejoin="round" stroke-linecap="round"/>
<path d="M142.5 404.5 L147.5 396.5 L152.5 404.5" stroke="#840000" stroke-width="1.4" fill="none" stroke-linejoin="round" stroke-linecap="round"/>
<text x="147.5" y="381.2" fill="#006464" font-size="12.2" text-anchor="middle" dominant-baseline="central" letter-spacing="0.55">+3V3</text>
<path d="M374.5 258.5 L374.5 266.5" stroke="#840000" stroke-width="1.4" fill="none" stroke-linejoin="round" stroke-linecap="round"/>
<path d="M366.5 266.5 L382.5 266.5 L374.5 274.5Z" stroke="#840000" stroke-width="1.4" fill="none" stroke-linejoin="round" stroke-linecap="round"/>
<text x="374.5" y="292.2" fill="#006464" font-size="12.2" text-anchor="middle" dominant-baseline="central" letter-spacing="0.55">GND</text>
<path d="M34.5 623.5 L34.5 631.5" stroke="#840000" stroke-width="1.4" fill="none" stroke-linejoin="round" stroke-linecap="round"/>
<path d="M26.5 631.5 L42.5 631.5 L34.5 639.5Z" stroke="#840000" stroke-width="1.4" fill="none" stroke-linejoin="round" stroke-linecap="round"/>
<text x="34.5" y="656.2" fill="#006464" font-size="12.2" text-anchor="middle" dominant-baseline="central" letter-spacing="0.55">GND</text>
<path d="M91.5 623.5 L91.5 631.5" stroke="#840000" stroke-width="1.4" fill="none" stroke-linejoin="round" stroke-linecap="round"/>
<path d="M82.5 631.5 L99.5 631.5 L91.5 639.5Z" stroke="#840000" stroke-width="1.4" fill="none" stroke-linejoin="round" stroke-linecap="round"/>
<text x="91.5" y="656.2" fill="#006464" font-size="12.2" text-anchor="middle" dominant-baseline="central" letter-spacing="0.55">GND</text>
<path d="M147.5 623.5 L147.5 631.5" stroke="#840000" stroke-width="1.4" fill="none" stroke-linejoin="round" stroke-linecap="round"/>
<path d="M139.5 631.5 L155.5 631.5 L147.5 639.5Z" stroke="#840000" stroke-width="1.4" fill="none" stroke-linejoin="round" stroke-linecap="round"/>
<text x="147.5" y="656.2" fill="#006464" font-size="12.2" text-anchor="middle" dominant-baseline="central" letter-spacing="0.55">GND</text>
<path d="M423.5 631.5 L423.5 639.5" stroke="#840000" stroke-width="1.4" fill="none" stroke-linejoin="round" stroke-linecap="round"/>
<path d="M415.5 639.5 L431.5 639.5 L423.5 647.5Z" stroke="#840000" stroke-width="1.4" fill="none" stroke-linejoin="round" stroke-linecap="round"/>
<text x="423.5" y="664.2" fill="#006464" font-size="12.2" text-anchor="middle" dominant-baseline="central" letter-spacing="0.55">GND</text>
<path d="M382.5 258.5 L395.5 258.5" stroke="#840000" stroke-width="1.4" fill="none" stroke-linejoin="round" stroke-linecap="round"/>
<path d="M402.5 258.5 L415.5 258.5" stroke="#840000" stroke-width="1.4" fill="none" stroke-linejoin="round" stroke-linecap="round"/>
<path d="M395.5 248.5 L395.5 268.5" stroke="#840000" stroke-width="2.0" fill="none" stroke-linejoin="butt" stroke-linecap="round"/>
<path d="M402.5 248.5 L402.5 268.5" stroke="#840000" stroke-width="2.0" fill="none" stroke-linejoin="round" stroke-linecap="round"/>
<text x="398.5" y="219.1" fill="#006464" font-size="12.2" text-anchor="middle" dominant-baseline="central" letter-spacing="0.55">C1</text>
<text x="398.5" y="235.2" fill="#006464" font-size="12.2" text-anchor="middle" dominant-baseline="central" letter-spacing="0.55" textLength="33" lengthAdjust="spacingAndGlyphs">0.1uF</text>
<path d="M34.5 412.5 L34.5 428.5" stroke="#840000" stroke-width="1.4" fill="none" stroke-linejoin="round" stroke-linecap="round"/>
<path d="M34.5 445.5 L34.5 461.5" stroke="#840000" stroke-width="1.4" fill="none" stroke-linejoin="round" stroke-linecap="round"/>
<path d="M28 434.9 A6.5 6.5 0 0 1 41 434.9Z" fill="#840000" stroke="#840000" stroke-width="1.2"/>
<path d="M28 438.1 A6.5 6.5 0 0 0 41 438.1Z" fill="#840000" stroke="#840000" stroke-width="1.2"/>
<text x="30.7" y="420.5" fill="#a90000" font-size="12.2" text-anchor="middle" dominant-baseline="central" letter-spacing="0.55" transform="rotate(-90 29.9 420.5)">2</text>
<text x="30.7" y="453.5" fill="#a90000" font-size="12.2" text-anchor="middle" dominant-baseline="central" letter-spacing="0.55" transform="rotate(-90 29.9 453.5)">1</text>
<text x="52" y="428.8" fill="#006464" font-size="12.2" text-anchor="start" dominant-baseline="central" letter-spacing="0.55">JP3</text>
<text x="52" y="445" fill="#006464" font-size="12.2" text-anchor="start" dominant-baseline="central" letter-spacing="0.55">A2</text>
<path d="M91.5 412.5 L91.5 428.5" stroke="#840000" stroke-width="1.4" fill="none" stroke-linejoin="round" stroke-linecap="round"/>
<path d="M91.5 445.5 L91.5 461.5" stroke="#840000" stroke-width="1.4" fill="none" stroke-linejoin="round" stroke-linecap="round"/>
<path d="M85 434.9 A6.5 6.5 0 0 1 98 434.9Z" fill="#840000" stroke="#840000" stroke-width="1.2"/>
<path d="M85 438.1 A6.5 6.5 0 0 0 98 438.1Z" fill="#840000" stroke="#840000" stroke-width="1.2"/>
<text x="87.7" y="420.5" fill="#a90000" font-size="12.2" text-anchor="middle" dominant-baseline="central" letter-spacing="0.55" transform="rotate(-90 86.9 420.5)">2</text>
<text x="87.7" y="453.5" fill="#a90000" font-size="12.2" text-anchor="middle" dominant-baseline="central" letter-spacing="0.55" transform="rotate(-90 86.9 453.5)">1</text>
<text x="109" y="428.8" fill="#006464" font-size="12.2" text-anchor="start" dominant-baseline="central" letter-spacing="0.55">JP2</text>
<text x="109" y="445" fill="#006464" font-size="12.2" text-anchor="start" dominant-baseline="central" letter-spacing="0.55">A1</text>
<path d="M147.5 412.5 L147.5 428.5" stroke="#840000" stroke-width="1.4" fill="none" stroke-linejoin="round" stroke-linecap="round"/>
<path d="M147.5 445.5 L147.5 461.5" stroke="#840000" stroke-width="1.4" fill="none" stroke-linejoin="round" stroke-linecap="round"/>
<path d="M141 434.9 A6.5 6.5 0 0 1 154 434.9Z" fill="#840000" stroke="#840000" stroke-width="1.2"/>
<path d="M141 438.1 A6.5 6.5 0 0 0 154 438.1Z" fill="#840000" stroke="#840000" stroke-width="1.2"/>
<text x="143.7" y="420.5" fill="#a90000" font-size="12.2" text-anchor="middle" dominant-baseline="central" letter-spacing="0.55" transform="rotate(-90 142.9 420.5)">2</text>
<text x="143.7" y="453.5" fill="#a90000" font-size="12.2" text-anchor="middle" dominant-baseline="central" letter-spacing="0.55" transform="rotate(-90 142.9 453.5)">1</text>
<text x="165" y="428.8" fill="#006464" font-size="12.2" text-anchor="start" dominant-baseline="central" letter-spacing="0.55">JP1</text>
<text x="165" y="445" fill="#006464" font-size="12.2" text-anchor="start" dominant-baseline="central" letter-spacing="0.55">A0</text>
<path d="M204.4 323.4 L198 315.4 L166.5 315.4 L166.5 331.5 L198 331.5 Z" fill="none" stroke="#840000" stroke-width="1.5" stroke-linejoin="miter"/>
<path d="M204.4 339.5 L198 331.5 L166.5 331.5 L159.3 339.5 L166.5 347.6 L198 347.6 Z" fill="none" stroke="#840000" stroke-width="1.5" stroke-linejoin="miter"/>
<text x="184" y="324.3" fill="#840000" font-size="12.2" text-anchor="middle" dominant-baseline="central" letter-spacing="0.55">SDA</text>
<text x="184.4" y="340.5" fill="#840000" font-size="12.2" text-anchor="middle" dominant-baseline="central" letter-spacing="0.55">SCL</text>
<rect x="342.5" y="307.5" width="162" height="291" fill="#ffffff"/>
<rect x="342.5" y="307.5" width="162" height="291" fill="none" stroke="#b0eafb" stroke-width="5.4"/><path d="M309.5 323.5 L342.5 323.5" stroke="#b0eafb" stroke-width="4.5" fill="none" stroke-linejoin="round" stroke-linecap="round"/><path d="M309.5 339.5 L342.5 339.5" stroke="#b0eafb" stroke-width="4.5" fill="none" stroke-linejoin="round" stroke-linecap="round"/><path d="M309.5 420.5 L342.5 420.5" stroke="#b0eafb" stroke-width="4.5" fill="none" stroke-linejoin="round" stroke-linecap="round"/><path d="M309.5 436.5 L342.5 436.5" stroke="#b0eafb" stroke-width="4.5" fill="none" stroke-linejoin="round" stroke-linecap="round"/><path d="M309.5 469.5 L342.5 469.5" stroke="#b0eafb" stroke-width="4.5" fill="none" stroke-linejoin="round" stroke-linecap="round"/><path d="M309.5 550.5 L342.5 550.5" stroke="#b0eafb" stroke-width="4.5" fill="none" stroke-linejoin="round" stroke-linecap="round"/><path d="M309.5 566.5 L342.5 566.5" stroke="#b0eafb" stroke-width="4.5" fill="none" stroke-linejoin="round" stroke-linecap="round"/><path d="M309.5 582.5 L342.5 582.5" stroke="#b0eafb" stroke-width="4.5" fill="none" stroke-linejoin="round" stroke-linecap="round"/><path d="M504.5 323.5 L536.5 323.5" stroke="#b0eafb" stroke-width="4.5" fill="none" stroke-linejoin="round" stroke-linecap="round"/><path d="M504.5 339.5 L536.5 339.5" stroke="#b0eafb" stroke-width="4.5" fill="none" stroke-linejoin="round" stroke-linecap="round"/><path d="M504.5 355.5 L536.5 355.5" stroke="#b0eafb" stroke-width="4.5" fill="none" stroke-linejoin="round" stroke-linecap="round"/><path d="M504.5 372.5 L536.5 372.5" stroke="#b0eafb" stroke-width="4.5" fill="none" stroke-linejoin="round" stroke-linecap="round"/><path d="M504.5 388.5 L536.5 388.5" stroke="#b0eafb" stroke-width="4.5" fill="none" stroke-linejoin="round" stroke-linecap="round"/><path d="M504.5 404.5 L536.5 404.5" stroke="#b0eafb" stroke-width="4.5" fill="none" stroke-linejoin="round" stroke-linecap="round"/><path d="M504.5 420.5 L536.5 420.5" stroke="#b0eafb" stroke-width="4.5" fill="none" stroke-linejoin="round" stroke-linecap="round"/><path d="M504.5 436.5 L536.5 436.5" stroke="#b0eafb" stroke-width="4.5" fill="none" stroke-linejoin="round" stroke-linecap="round"/><path d="M504.5 469.5 L536.5 469.5" stroke="#b0eafb" stroke-width="4.5" fill="none" stroke-linejoin="round" stroke-linecap="round"/><path d="M504.5 485.5 L536.5 485.5" stroke="#b0eafb" stroke-width="4.5" fill="none" stroke-linejoin="round" stroke-linecap="round"/><path d="M504.5 501.5 L536.5 501.5" stroke="#b0eafb" stroke-width="4.5" fill="none" stroke-linejoin="round" stroke-linecap="round"/><path d="M504.5 517.5 L536.5 517.5" stroke="#b0eafb" stroke-width="4.5" fill="none" stroke-linejoin="round" stroke-linecap="round"/><path d="M504.5 534.5 L536.5 534.5" stroke="#b0eafb" stroke-width="4.5" fill="none" stroke-linejoin="round" stroke-linecap="round"/><path d="M504.5 550.5 L536.5 550.5" stroke="#b0eafb" stroke-width="4.5" fill="none" stroke-linejoin="round" stroke-linecap="round"/><path d="M504.5 566.5 L536.5 566.5" stroke="#b0eafb" stroke-width="4.5" fill="none" stroke-linejoin="round" stroke-linecap="round"/><path d="M504.5 582.5 L536.5 582.5" stroke="#b0eafb" stroke-width="4.5" fill="none" stroke-linejoin="round" stroke-linecap="round"/><path d="M423.5 274.5 L423.5 307.5" stroke="#b0eafb" stroke-width="4.5" fill="none" stroke-linejoin="round" stroke-linecap="round"/><path d="M423.5 598.5 L423.5 631.5" stroke="#b0eafb" stroke-width="4.5" fill="none" stroke-linejoin="round" stroke-linecap="round"/>
<rect x="342.5" y="307.5" width="162" height="291" fill="none" stroke="#840000" stroke-width="2"/>
<path d="M309.5 323.5 L342.5 323.5" stroke="#840000" stroke-width="1.4" fill="none" stroke-linejoin="butt" stroke-linecap="butt"/>
<text x="326.5" y="317.8" fill="#a90000" font-size="12.2" text-anchor="middle" dominant-baseline="central" letter-spacing="0.55" stroke="#b0eafb" stroke-width="3.2" paint-order="stroke" stroke-linejoin="round">13</text>
<text x="351.3" y="324.2" fill="#006464" font-size="12.2" text-anchor="start" dominant-baseline="central" letter-spacing="0.55" stroke="#b0eafb" stroke-width="3.2" paint-order="stroke" stroke-linejoin="round">SDA</text>
<path d="M309.5 339.5 L342.5 339.5" stroke="#840000" stroke-width="1.4" fill="none" stroke-linejoin="butt" stroke-linecap="butt"/>
<text x="326.5" y="333.8" fill="#a90000" font-size="12.2" text-anchor="middle" dominant-baseline="central" letter-spacing="0.55" stroke="#b0eafb" stroke-width="3.2" paint-order="stroke" stroke-linejoin="round">12</text>
<text x="351.3" y="340.2" fill="#006464" font-size="12.2" text-anchor="start" dominant-baseline="central" letter-spacing="0.55" stroke="#b0eafb" stroke-width="3.2" paint-order="stroke" stroke-linejoin="round">SCK</text>
<path d="M309.5 420.5 L342.5 420.5" stroke="#840000" stroke-width="1.4" fill="none" stroke-linejoin="butt" stroke-linecap="butt"/>
<text x="326.5" y="414.8" fill="#a90000" font-size="12.2" text-anchor="middle" dominant-baseline="central" letter-spacing="0.55" stroke="#b0eafb" stroke-width="3.2" paint-order="stroke" stroke-linejoin="round">19</text>
<text x="351.3" y="421.2" fill="#006464" font-size="12.2" text-anchor="start" dominant-baseline="central" letter-spacing="0.55" stroke="#b0eafb" stroke-width="3.2" paint-order="stroke" stroke-linejoin="round" textLength="26" lengthAdjust="spacingAndGlyphs">INTB</text>
<path d="M309.5 436.5 L342.5 436.5" stroke="#840000" stroke-width="1.4" fill="none" stroke-linejoin="butt" stroke-linecap="butt"/>
<text x="326.5" y="430.8" fill="#a90000" font-size="12.2" text-anchor="middle" dominant-baseline="central" letter-spacing="0.55" stroke="#b0eafb" stroke-width="3.2" paint-order="stroke" stroke-linejoin="round">20</text>
<text x="351.3" y="437.2" fill="#006464" font-size="12.2" text-anchor="start" dominant-baseline="central" letter-spacing="0.55" stroke="#b0eafb" stroke-width="3.2" paint-order="stroke" stroke-linejoin="round" textLength="26" lengthAdjust="spacingAndGlyphs">INTA</text>
<path d="M309.5 469.5 L342.5 469.5" stroke="#840000" stroke-width="1.4" fill="none" stroke-linejoin="butt" stroke-linecap="butt"/>
<text x="326.5" y="463.8" fill="#a90000" font-size="12.2" text-anchor="middle" dominant-baseline="central" letter-spacing="0.55" stroke="#b0eafb" stroke-width="3.2" paint-order="stroke" stroke-linejoin="round">18</text>
<text x="351.3" y="470.2" fill="#006464" font-size="12.2" text-anchor="start" dominant-baseline="central" letter-spacing="0.55" stroke="#b0eafb" stroke-width="3.2" paint-order="stroke" stroke-linejoin="round">RESET</text>
<path d="M351 462.7 H387.5" stroke="#006464" stroke-width="1.2"/>
<path d="M309.5 550.5 L342.5 550.5" stroke="#840000" stroke-width="1.4" fill="none" stroke-linejoin="butt" stroke-linecap="butt"/>
<text x="326.5" y="544.8" fill="#a90000" font-size="12.2" text-anchor="middle" dominant-baseline="central" letter-spacing="0.55" stroke="#b0eafb" stroke-width="3.2" paint-order="stroke" stroke-linejoin="round">17</text>
<text x="351.3" y="551.2" fill="#006464" font-size="12.2" text-anchor="start" dominant-baseline="central" letter-spacing="0.55" stroke="#b0eafb" stroke-width="3.2" paint-order="stroke" stroke-linejoin="round">A2</text>
<path d="M309.5 566.5 L342.5 566.5" stroke="#840000" stroke-width="1.4" fill="none" stroke-linejoin="butt" stroke-linecap="butt"/>
<text x="326.5" y="560.8" fill="#a90000" font-size="12.2" text-anchor="middle" dominant-baseline="central" letter-spacing="0.55" stroke="#b0eafb" stroke-width="3.2" paint-order="stroke" stroke-linejoin="round">16</text>
<text x="351.3" y="567.2" fill="#006464" font-size="12.2" text-anchor="start" dominant-baseline="central" letter-spacing="0.55" stroke="#b0eafb" stroke-width="3.2" paint-order="stroke" stroke-linejoin="round">A1</text>
<path d="M309.5 582.5 L342.5 582.5" stroke="#840000" stroke-width="1.4" fill="none" stroke-linejoin="butt" stroke-linecap="butt"/>
<text x="326.5" y="576.8" fill="#a90000" font-size="12.2" text-anchor="middle" dominant-baseline="central" letter-spacing="0.55" stroke="#b0eafb" stroke-width="3.2" paint-order="stroke" stroke-linejoin="round">15</text>
<text x="351.3" y="583.2" fill="#006464" font-size="12.2" text-anchor="start" dominant-baseline="central" letter-spacing="0.55" stroke="#b0eafb" stroke-width="3.2" paint-order="stroke" stroke-linejoin="round">A0</text>
<path d="M504.5 323.5 L536.5 323.5" stroke="#840000" stroke-width="1.4" fill="none" stroke-linejoin="butt" stroke-linecap="butt"/>
<text x="520.5" y="317.8" fill="#a90000" font-size="12.2" text-anchor="middle" dominant-baseline="central" letter-spacing="0.55" stroke="#b0eafb" stroke-width="3.2" paint-order="stroke" stroke-linejoin="round">1</text>
<text x="495.2" y="324.2" fill="#006464" font-size="12.2" text-anchor="end" dominant-baseline="central" letter-spacing="0.55" stroke="#b0eafb" stroke-width="3.2" paint-order="stroke" stroke-linejoin="round">GPB0</text>
<path d="M504.5 339.5 L536.5 339.5" stroke="#840000" stroke-width="1.4" fill="none" stroke-linejoin="butt" stroke-linecap="butt"/>
<text x="520.5" y="333.8" fill="#a90000" font-size="12.2" text-anchor="middle" dominant-baseline="central" letter-spacing="0.55" stroke="#b0eafb" stroke-width="3.2" paint-order="stroke" stroke-linejoin="round">2</text>
<text x="495.2" y="340.2" fill="#006464" font-size="12.2" text-anchor="end" dominant-baseline="central" letter-spacing="0.55" stroke="#b0eafb" stroke-width="3.2" paint-order="stroke" stroke-linejoin="round">GPB1</text>
<path d="M504.5 355.5 L536.5 355.5" stroke="#840000" stroke-width="1.4" fill="none" stroke-linejoin="butt" stroke-linecap="butt"/>
<text x="520.5" y="349.8" fill="#a90000" font-size="12.2" text-anchor="middle" dominant-baseline="central" letter-spacing="0.55" stroke="#b0eafb" stroke-width="3.2" paint-order="stroke" stroke-linejoin="round">3</text>
<text x="495.2" y="356.2" fill="#006464" font-size="12.2" text-anchor="end" dominant-baseline="central" letter-spacing="0.55" stroke="#b0eafb" stroke-width="3.2" paint-order="stroke" stroke-linejoin="round">GPB2</text>
<path d="M504.5 372.5 L536.5 372.5" stroke="#840000" stroke-width="1.4" fill="none" stroke-linejoin="butt" stroke-linecap="butt"/>
<text x="520.5" y="366.8" fill="#a90000" font-size="12.2" text-anchor="middle" dominant-baseline="central" letter-spacing="0.55" stroke="#b0eafb" stroke-width="3.2" paint-order="stroke" stroke-linejoin="round">4</text>
<text x="495.2" y="373.2" fill="#006464" font-size="12.2" text-anchor="end" dominant-baseline="central" letter-spacing="0.55" stroke="#b0eafb" stroke-width="3.2" paint-order="stroke" stroke-linejoin="round">GPB3</text>
<path d="M504.5 388.5 L536.5 388.5" stroke="#840000" stroke-width="1.4" fill="none" stroke-linejoin="butt" stroke-linecap="butt"/>
<text x="520.5" y="382.8" fill="#a90000" font-size="12.2" text-anchor="middle" dominant-baseline="central" letter-spacing="0.55" stroke="#b0eafb" stroke-width="3.2" paint-order="stroke" stroke-linejoin="round">5</text>
<text x="495.2" y="389.2" fill="#006464" font-size="12.2" text-anchor="end" dominant-baseline="central" letter-spacing="0.55" stroke="#b0eafb" stroke-width="3.2" paint-order="stroke" stroke-linejoin="round">GPB4</text>
<path d="M504.5 404.5 L536.5 404.5" stroke="#840000" stroke-width="1.4" fill="none" stroke-linejoin="butt" stroke-linecap="butt"/>
<text x="520.5" y="398.8" fill="#a90000" font-size="12.2" text-anchor="middle" dominant-baseline="central" letter-spacing="0.55" stroke="#b0eafb" stroke-width="3.2" paint-order="stroke" stroke-linejoin="round">6</text>
<text x="495.2" y="405.2" fill="#006464" font-size="12.2" text-anchor="end" dominant-baseline="central" letter-spacing="0.55" stroke="#b0eafb" stroke-width="3.2" paint-order="stroke" stroke-linejoin="round">GPB5</text>
<path d="M504.5 420.5 L536.5 420.5" stroke="#840000" stroke-width="1.4" fill="none" stroke-linejoin="butt" stroke-linecap="butt"/>
<text x="520.5" y="414.8" fill="#a90000" font-size="12.2" text-anchor="middle" dominant-baseline="central" letter-spacing="0.55" stroke="#b0eafb" stroke-width="3.2" paint-order="stroke" stroke-linejoin="round">7</text>
<text x="495.2" y="421.2" fill="#006464" font-size="12.2" text-anchor="end" dominant-baseline="central" letter-spacing="0.55" stroke="#b0eafb" stroke-width="3.2" paint-order="stroke" stroke-linejoin="round">GPB6</text>
<path d="M504.5 436.5 L536.5 436.5" stroke="#840000" stroke-width="1.4" fill="none" stroke-linejoin="butt" stroke-linecap="butt"/>
<text x="520.5" y="430.8" fill="#a90000" font-size="12.2" text-anchor="middle" dominant-baseline="central" letter-spacing="0.55" stroke="#b0eafb" stroke-width="3.2" paint-order="stroke" stroke-linejoin="round">8</text>
<text x="495.2" y="437.2" fill="#006464" font-size="12.2" text-anchor="end" dominant-baseline="central" letter-spacing="0.55" stroke="#b0eafb" stroke-width="3.2" paint-order="stroke" stroke-linejoin="round">GPB7</text>
<path d="M504.5 469.5 L536.5 469.5" stroke="#840000" stroke-width="1.4" fill="none" stroke-linejoin="butt" stroke-linecap="butt"/>
<text x="520.5" y="463.8" fill="#a90000" font-size="12.2" text-anchor="middle" dominant-baseline="central" letter-spacing="0.55" stroke="#b0eafb" stroke-width="3.2" paint-order="stroke" stroke-linejoin="round">21</text>
<text x="495.2" y="470.2" fill="#006464" font-size="12.2" text-anchor="end" dominant-baseline="central" letter-spacing="0.55" stroke="#b0eafb" stroke-width="3.2" paint-order="stroke" stroke-linejoin="round">GPA0</text>
<path d="M504.5 485.5 L536.5 485.5" stroke="#840000" stroke-width="1.4" fill="none" stroke-linejoin="butt" stroke-linecap="butt"/>
<text x="520.5" y="479.8" fill="#a90000" font-size="12.2" text-anchor="middle" dominant-baseline="central" letter-spacing="0.55" stroke="#b0eafb" stroke-width="3.2" paint-order="stroke" stroke-linejoin="round">22</text>
<text x="495.2" y="486.2" fill="#006464" font-size="12.2" text-anchor="end" dominant-baseline="central" letter-spacing="0.55" stroke="#b0eafb" stroke-width="3.2" paint-order="stroke" stroke-linejoin="round">GPA1</text>
<path d="M504.5 501.5 L536.5 501.5" stroke="#840000" stroke-width="1.4" fill="none" stroke-linejoin="butt" stroke-linecap="butt"/>
<text x="520.5" y="495.8" fill="#a90000" font-size="12.2" text-anchor="middle" dominant-baseline="central" letter-spacing="0.55" stroke="#b0eafb" stroke-width="3.2" paint-order="stroke" stroke-linejoin="round">23</text>
<text x="495.2" y="502.2" fill="#006464" font-size="12.2" text-anchor="end" dominant-baseline="central" letter-spacing="0.55" stroke="#b0eafb" stroke-width="3.2" paint-order="stroke" stroke-linejoin="round">GPA2</text>
<path d="M504.5 517.5 L536.5 517.5" stroke="#840000" stroke-width="1.4" fill="none" stroke-linejoin="butt" stroke-linecap="butt"/>
<text x="520.5" y="511.8" fill="#a90000" font-size="12.2" text-anchor="middle" dominant-baseline="central" letter-spacing="0.55" stroke="#b0eafb" stroke-width="3.2" paint-order="stroke" stroke-linejoin="round">24</text>
<text x="495.2" y="518.2" fill="#006464" font-size="12.2" text-anchor="end" dominant-baseline="central" letter-spacing="0.55" stroke="#b0eafb" stroke-width="3.2" paint-order="stroke" stroke-linejoin="round">GPA3</text>
<path d="M504.5 534.5 L536.5 534.5" stroke="#840000" stroke-width="1.4" fill="none" stroke-linejoin="butt" stroke-linecap="butt"/>
<text x="520.5" y="528.8" fill="#a90000" font-size="12.2" text-anchor="middle" dominant-baseline="central" letter-spacing="0.55" stroke="#b0eafb" stroke-width="3.2" paint-order="stroke" stroke-linejoin="round">25</text>
<text x="495.2" y="535.2" fill="#006464" font-size="12.2" text-anchor="end" dominant-baseline="central" letter-spacing="0.55" stroke="#b0eafb" stroke-width="3.2" paint-order="stroke" stroke-linejoin="round">GPA4</text>
<path d="M504.5 550.5 L536.5 550.5" stroke="#840000" stroke-width="1.4" fill="none" stroke-linejoin="butt" stroke-linecap="butt"/>
<text x="520.5" y="544.8" fill="#a90000" font-size="12.2" text-anchor="middle" dominant-baseline="central" letter-spacing="0.55" stroke="#b0eafb" stroke-width="3.2" paint-order="stroke" stroke-linejoin="round">26</text>
<text x="495.2" y="551.2" fill="#006464" font-size="12.2" text-anchor="end" dominant-baseline="central" letter-spacing="0.55" stroke="#b0eafb" stroke-width="3.2" paint-order="stroke" stroke-linejoin="round">GPA5</text>
<path d="M504.5 566.5 L536.5 566.5" stroke="#840000" stroke-width="1.4" fill="none" stroke-linejoin="butt" stroke-linecap="butt"/>
<text x="520.5" y="560.8" fill="#a90000" font-size="12.2" text-anchor="middle" dominant-baseline="central" letter-spacing="0.55" stroke="#b0eafb" stroke-width="3.2" paint-order="stroke" stroke-linejoin="round">27</text>
<text x="495.2" y="567.2" fill="#006464" font-size="12.2" text-anchor="end" dominant-baseline="central" letter-spacing="0.55" stroke="#b0eafb" stroke-width="3.2" paint-order="stroke" stroke-linejoin="round">GPA6</text>
<path d="M504.5 582.5 L536.5 582.5" stroke="#840000" stroke-width="1.4" fill="none" stroke-linejoin="butt" stroke-linecap="butt"/>
<text x="520.5" y="576.8" fill="#a90000" font-size="12.2" text-anchor="middle" dominant-baseline="central" letter-spacing="0.55" stroke="#b0eafb" stroke-width="3.2" paint-order="stroke" stroke-linejoin="round">28</text>
<text x="495.2" y="583.2" fill="#006464" font-size="12.2" text-anchor="end" dominant-baseline="central" letter-spacing="0.55" stroke="#b0eafb" stroke-width="3.2" paint-order="stroke" stroke-linejoin="round">GPA7</text>
<path d="M423.5 274.5 L423.5 307.5" stroke="#840000" stroke-width="1.4" fill="none" stroke-linejoin="round" stroke-linecap="round"/>
<path d="M423.5 598.5 L423.5 631.5" stroke="#840000" stroke-width="1.4" fill="none" stroke-linejoin="round" stroke-linecap="round"/>
<text x="417.5" y="291.5" fill="#a90000" font-size="12.2" text-anchor="middle" dominant-baseline="central" letter-spacing="0.55" transform="rotate(-90 416.7 291.5)" stroke="#b0eafb" stroke-width="3.2" paint-order="stroke" stroke-linejoin="round">9</text>
<text x="418.1" y="615.5" fill="#a90000" font-size="12.2" text-anchor="middle" dominant-baseline="central" letter-spacing="0.55" transform="rotate(-90 417.3 615.5)" stroke="#b0eafb" stroke-width="3.2" paint-order="stroke" stroke-linejoin="round">10</text>
<text x="423.5" y="317" fill="#006464" font-size="12.2" text-anchor="end" dominant-baseline="central" letter-spacing="0.55" transform="rotate(-90 422.7 317)" stroke="#b0eafb" stroke-width="3.2" paint-order="stroke" stroke-linejoin="round">VDD</text>
<text x="423.5" y="591.2" fill="#006464" font-size="12.2" text-anchor="start" dominant-baseline="central" letter-spacing="0.55" transform="rotate(-90 422.7 591.2)" stroke="#b0eafb" stroke-width="3.2" paint-order="stroke" stroke-linejoin="round">VSS</text>
<text x="438.9" y="275.7" fill="#006464" font-size="12.2" text-anchor="start" dominant-baseline="central" letter-spacing="0.55" stroke="#b0eafb" stroke-width="3.2" paint-order="stroke" stroke-linejoin="round">U1</text>
<text x="438.9" y="291.3" fill="#006464" font-size="12.2" text-anchor="start" dominant-baseline="central" letter-spacing="0.55" stroke="#b0eafb" stroke-width="3.2" paint-order="stroke" stroke-linejoin="round">MCP23017_SO</text>
<path d="M434.5 275.5h4M436.5 273.5v4M434.5 291h4M436.5 289v4" stroke="#0000ff" stroke-width="1"/>
<path d="M305.5 416.5 L313.5 424.5 M305.5 424.5 L313.5 416.5" stroke="#0000c2" stroke-width="1.3"/>
<path d="M305.5 432.5 L313.5 440.5 M305.5 440.5 L313.5 432.5" stroke="#0000c2" stroke-width="1.3"/>
<path d="M532.5 432.5 L540.5 440.5 M532.5 440.5 L540.5 432.5" stroke="#0000c2" stroke-width="1.3"/>
<path d="M532.5 578.5 L540.5 586.5 M532.5 586.5 L540.5 578.5" stroke="#0000c2" stroke-width="1.3"/>
<rect x="690" y="0" width="1" height="934" fill="#9a9a9a"/>
<rect x="691" y="0" width="44" height="934" fill="#f0f0f0"/>
<rect x="735" y="0" width="5" height="934" fill="#d9d9d9"/>
<rect x="740" y="0" width="1" height="934" fill="#ababb3"/>
<path d="M698.6 8.4H713.6V-2" stroke="#c8193c" stroke-width="2.6" fill="none" stroke-linecap="round"/>
<path d="M716 2.1H727.5M721 -3V11.2M707 -1V2.3H712" stroke="#555555" stroke-width="2.4" fill="none" stroke-linecap="round"/>
<rect x="696" y="21" width="34" height="1" fill="#8a8a8a"/>
<rect x="696" y="645" width="34" height="1" fill="#8a8a8a"/>
<path d="M704.2 34L723.6 47.1L704.2 60.2Z" stroke="#555555" stroke-width="2.6" fill="none" stroke-linejoin="miter" stroke-miterlimit="2"/>
<path d="M698.4 39.8H703M698.4 55.1H703M724 47.1H727.7M706.6 43.4H711.8M706.8 50.3H712M709.4 47.6V53" stroke="#555555" stroke-width="1.8" fill="none"/>
<path d="M713.3 74.6V90M701.2 90.5H725.9M705.5 95.8H721.9M709 101H717.6" stroke="#555555" stroke-width="2.8" fill="none" stroke-linecap="butt"/>
<path d="M701.8 141L714.2 130M713.8 128.8L724.8 118.2" stroke="#1b7fcc" stroke-width="2.4" stroke-linecap="round"/>
<path d="M703 180.6L713.6 171.2M713.8 169.6L724 160.4" stroke="#1b7fcc" stroke-width="4.6" stroke-linecap="round"/>
<path d="M699.7 199.9H713M699.7 210.7H713" stroke="#555555" stroke-width="2.2"/>
<path d="M724.2 196V226" stroke="#555555" stroke-width="3.6"/>
<path d="M713 199.9L724 211M713 210.7L724 222" stroke="#1b7fcc" stroke-width="1.8"/>
<path d="M698 252H712" stroke="#555555" stroke-width="2"/>
<path d="M707.2 246L719.6 258.6M707.2 258.6L719.6 246" stroke="#1b7fcc" stroke-width="2.4" stroke-linecap="round"/>
<path d="M698 293.4H713M713.4 278V308" stroke="#555555" stroke-width="2"/>
<circle cx="713.4" cy="293.4" r="4.6" fill="#1b7fcc"/>
<path d="M706 338.6L713.4 324.7L720.8 338.6M708.6 333.6H718.2" stroke="#555555" stroke-width="2" fill="none"/>
<path d="M700 341.7H727" stroke="#555555" stroke-width="2.6" stroke-linecap="round"/>
<circle cx="707" cy="371" r="4.6" stroke="#555555" stroke-width="2.6" fill="none"/>
<path d="M707 375.5V382.5" stroke="#555555" stroke-width="2.6" stroke-linecap="round"/>
<path d="M713.8 380L721.5 365.4H724L724 380M716.5 375H723.8" stroke="#555555" stroke-width="1.6" fill="none"/>
<defs><pattern id="hatch" width="6" height="6" patternUnits="userSpaceOnUse" patternTransform="rotate(-45)"><rect width="6" height="6" fill="#f4f4f4"/><rect width="3.3" height="6" fill="#555555"/></pattern></defs>
<path d="M709.8 404.4H725.8V428.2H701.2V417.8H709.8Z" fill="url(#hatch)" stroke="#555555" stroke-width="1.8"/>
<path d="M699.2 447.4H716.5L724.4 457.6L716.5 467.8H699.2Z" stroke="#555555" stroke-width="2.6" fill="none"/>
<path d="M706 464L711 450.8L716 464M707.5 460H714.5" stroke="#555555" stroke-width="1.5" fill="none"/>
<rect x="724.5" y="456.6" width="2.5" height="2" fill="#1b7fcc"/>
<path d="M700 505.7L706 491L712 505.7M702.2 500.5H709.8" stroke="#555555" stroke-width="1.8" fill="none"/>
<path d="M713.5 498L719.5 491.5L725.5 498L719.5 504.5Z" stroke="#555555" stroke-width="2.2" fill="none"/>
<path d="M725.5 498H728" stroke="#555555" stroke-width="1.8"/>
<rect x="698.6" y="524.6" width="26.8" height="27.4" rx="4" fill="#d6c9a8" stroke="#555555" stroke-width="1.6"/>
<path d="M698.6 537.4H703M711.3 524.6V530.2M711.3 529.2H725.6M703.8 535.6L711.3 530.4M703.8 539.4L710.2 543.8" stroke="#555555" stroke-width="2.2" fill="none"/>
<path d="M703.1 530.8V542.6" stroke="#555555" stroke-width="2.8"/>
<polygon points="705.4,544.8 711.6,545.2 709.2,539.8" fill="#555555"/>
<circle cx="719.6" cy="545.5" r="8.6" fill="#c5203e" stroke="#f2f2f2" stroke-width="1.4"/>
<path d="M719.6 540.2V550.8M714.2 545.5H725" stroke="#ffffff" stroke-width="2.6"/>
<path d="M699.2 569.8H716.5L726 580.2L716.5 590.6H699.2Z" stroke="#1b7fcc" stroke-width="2.4" fill="none"/>
<path d="M726 580.2H728" stroke="#1b7fcc" stroke-width="1.8"/>
<path d="M704.5 587L710 573L715.5 587M706.3 582.5H713.7" stroke="#555555" stroke-width="1.5" fill="none"/>
<rect x="698.6" y="606.6" width="24.4" height="22.4" fill="#d6c9a8" stroke="#555555" stroke-width="1.2"/>
<path d="M701 619.6L705.7 609.2L710.4 619.6M702.8 615.6H708.6" stroke="#555555" stroke-width="1.7" fill="none"/>
<path d="M712.8 613.7L717.8 608.8L722.8 613.7L717.8 618.6Z" stroke="#555555" stroke-width="1.7" fill="none"/>
<circle cx="719.6" cy="627.4" r="8.6" fill="#c5203e" stroke="#f2f2f2" stroke-width="1.4"/>
<path d="M719.6 622V632.6M715.2 628.6L719.6 633L724 628.6" stroke="#ffffff" stroke-width="2.4" fill="none"/>
<path d="M703.6 660.7H723.5M713.5 660.7V683.5" stroke="#555555" stroke-width="4" stroke-linecap="butt"/>
<rect x="702.2" y="702.5" width="22.6" height="20" fill="#c4c4c4" stroke="#555555" stroke-width="2.6"/>
<path d="M707 708H720.5M707 712.3H716.5M707 716.6H720.5" stroke="#555555" stroke-width="1.4"/>
<rect x="698.6" y="738.6" width="28.6" height="28.6" fill="#f7f7f7"/>
<rect x="698.6" y="738.6" width="28.6" height="8" fill="#c4c4c4"/>
<path d="M698.6 738.6H727.2M698.6 746.6H727.2M698.6 755H727.2M698.6 761.4H727.2M698.6 767H727.2M698.6 738.6V767.2M708.5 738.6V767.2M718 738.6V767.2M727 738.6V767.2" stroke="#555555" stroke-width="1.1"/>
<rect x="702.2" y="784.6" width="22.6" height="19.6" fill="#c4c4c4" stroke="#555555" stroke-width="2.6"/>
<circle cx="713.5" cy="835.4" r="11.2" fill="#c4c4c4" stroke="#555555" stroke-width="2.6"/>
<path d="M701.8 887.5C702.5 875 712 865.5 725.3 864.8" stroke="#555555" stroke-width="2.6" fill="none" stroke-linecap="round"/>
<path d="M700 916.8H726" stroke="#1b7fcc" stroke-width="1.6"/>
<rect x="699.2" y="915.2" width="3.8" height="3.2" fill="#1b7fcc"/><rect x="722.2" y="915.2" width="3.8" height="3.2" fill="#1b7fcc"/>
<path d="M720.8 905.6C722.5 912 719 916.6 713 916.8C706 917 704.5 924 705.8 929.2" stroke="#555555" stroke-width="2.4" fill="none" stroke-linecap="round"/>
<circle cx="713" cy="916.8" r="2" fill="#ffffff" stroke="#1b7fcc" stroke-width="1.2"/>
</svg>
<div id="panel">
<div class="ts" style="top:1.5px">2025/7/6 20:08:52</div>
<div class="bub ub"></div>
<div class="ut" style="top:44px">我要写一段嵌入式代码，请根据当前选中器件的</div>
<div class="ut" style="top:71px">引脚定义C程序的头文件</div>
<div class="ts" style="top:113px">2025/7/6 20:16:41</div>
<div class="av"><svg width="37" height="37" viewBox="0 0 37 37" style="position:absolute;left:0;top:0">
<g fill="#1e80c9" stroke="none">
<circle cx="18.3" cy="4.8" r="2.8"/>
<rect x="17.5" y="6" width="1.6" height="5"/>
<path d="M5.6 16 A4.8 4.9 0 0 0 5.6 25.8Z"/>
<path d="M31.3 16 A4.8 4.9 0 0 1 31.3 25.8Z"/>
<rect x="12.5" y="16.2" width="3" height="10.1" rx="0.8"/>
<rect x="21" y="16.2" width="3" height="10.1" rx="0.8"/>
<rect x="13" y="19.9" width="10.5" height="2.6"/>
<circle cx="27.4" cy="30.6" r="2.5"/>
</g>
<path d="M24.2 31.3 H12.4 A4 4 0 0 1 8.4 27.3 V15.2 A4 4 0 0 1 12.4 11.2 H24.3 A4 4 0 0 1 28.3 15.2 V26.8" fill="none" stroke="#1e80c9" stroke-width="3.3"/>
</svg></div>
<div class="bub ab"></div>
<div class="ut" style="top:225.5px;letter-spacing:0.3px">好的，根据当前选中的MCP23017器件引脚，这</div>
<div class="ut" style="top:252.5px;letter-spacing:0.3px">是一个您可以参考的C程序头文件：</div>
<div class="code"><div class="codein"><div class="cl"><span class="hs">#</span><span class="kw">define</span> <span class="id">SW3_PIN</span><span class="nm">   2</span>  <span class="cm">// GPB2</span></div><div class="cl"><span class="hs">#</span><span class="kw">define</span> <span class="id">SW4_PIN</span><span class="nm">   3</span>  <span class="cm">// GPB3</span></div><div class="cl"><span class="hs">#</span><span class="kw">define</span> <span class="id">SW9_PIN</span><span class="nm">   4</span>  <span class="cm">// GPB4</span></div><div class="cl"><span class="hs">#</span><span class="kw">define</span> <span class="id">SW10_PIN</span><span class="nm">  5</span>  <span class="cm">// GPB5</span></div><div class="cl"><span class="hs">#</span><span class="kw">define</span> <span class="id">SW11_PIN</span><span class="nm">  6</span>  <span class="cm">// GPB6</span></div><div class="cl"><span class="cm">// GPB7 未连接</span></div><div class="cl">&nbsp;</div><div class="cl"><span class="hs">#</span><span class="kw">define</span> <span class="id">SW5_PIN</span><span class="nm">   0</span>  <span class="cm">// GPA0</span></div><div class="cl"><span class="hs">#</span><span class="kw">define</span> <span class="id">SW6_PIN</span><span class="nm">   1</span>  <span class="cm">// GPA1</span></div><div class="cl"><span class="hs">#</span><span class="kw">define</span> <span class="id">SW7_PIN</span><span class="nm">   2</span>  <span class="cm">// GPA2</span></div><div class="cl"><span class="hs">#</span><span class="kw">define</span> <span class="id">SW8_PIN</span><span class="nm">   3</span>  <span class="cm">// GPA3</span></div><div class="cl"><span class="hs">#</span><span class="kw">define</span> <span class="id">SW12_PIN</span><span class="nm">  4</span>  <span class="cm">// GPA4</span></div><div class="cl"><span class="hs">#</span><span class="kw">define</span> <span class="id">SW13_PIN</span><span class="nm">  5</span>  <span class="cm">// GPA5</span></div><div class="cl"><span class="hs">#</span><span class="kw">define</span> <span class="id">SW14_PIN</span><span class="nm">  6</span>  <span class="cm">// GPA6</span></div><div class="cl"><span class="cm">// GPA7 未连接</span></div><div class="cl">&nbsp;</div><div class="cl"><span class="cm">// 函数声明 (示例)</span></div><div class="cl"><span class="ty">void </span><span class="fn">mcp23017_init</span><span class="pa">(</span><span class="ty">void</span><span class="pa">)</span><span class="pu">;</span></div><div class="cl"><span class="ty">uint8_t </span><span class="fn">mcp23017_read_gpioa</span><span class="pa">(</span><span class="ty">void</span><span class="pa">)</span><span class="pu">;</span></div><div class="cl"><span class="ty">uint8_t </span><span class="fn">mcp23017_read_gpiob</span><span class="pa">(</span><span class="ty">void</span><span class="pa">)</span><span class="pu">;</span></div><div class="cl"><span class="ty">void </span><span class="fn">mcp23017_write_gpioa</span><span class="pa">(</span><span class="ty">uint8_t value</span><span class="pa">)</span><span class="pu">;</span></div><div class="cl"><span class="ty">void </span><span class="fn">mcp23017_write_gpiob</span><span class="pa">(</span><span class="ty">uint8_t value</span><span class="pa">)</span><span class="pu">;</span></div><div class="cl">&nbsp;</div><div class="cl"><span class="hs">#</span><span class="kw">endif</span></div></div><div class="fade"></div><div style="position:absolute;left:0;top:519.5px;width:232px;height:9.4px;background:rgba(0,0,0,0.13);border-radius:0 5px 0 0"></div></div>
<div class="btn">查看全部</div>
<div class="nt">请注意:</div>
<div class="li"><span style="position:absolute;left:42.3px;top:10.8px;width:6.4px;height:6.4px;border-radius:50%;background:#262626"></span><span style="position:absolute;left:61.8px;top:0"><b>I2C地址:</b> <span class="chip">MCP23017_ADDR</span> 的定义非常重要。</span><span style="position:absolute;left:61.8px;top:27px">请务必根据您硬件上A0、A1、A2引脚的连接</span></div>
<div style="position:absolute;left:0;top:930px;width:432px;height:4px;background:#fafafa"></div>
</div>
</body></html>
